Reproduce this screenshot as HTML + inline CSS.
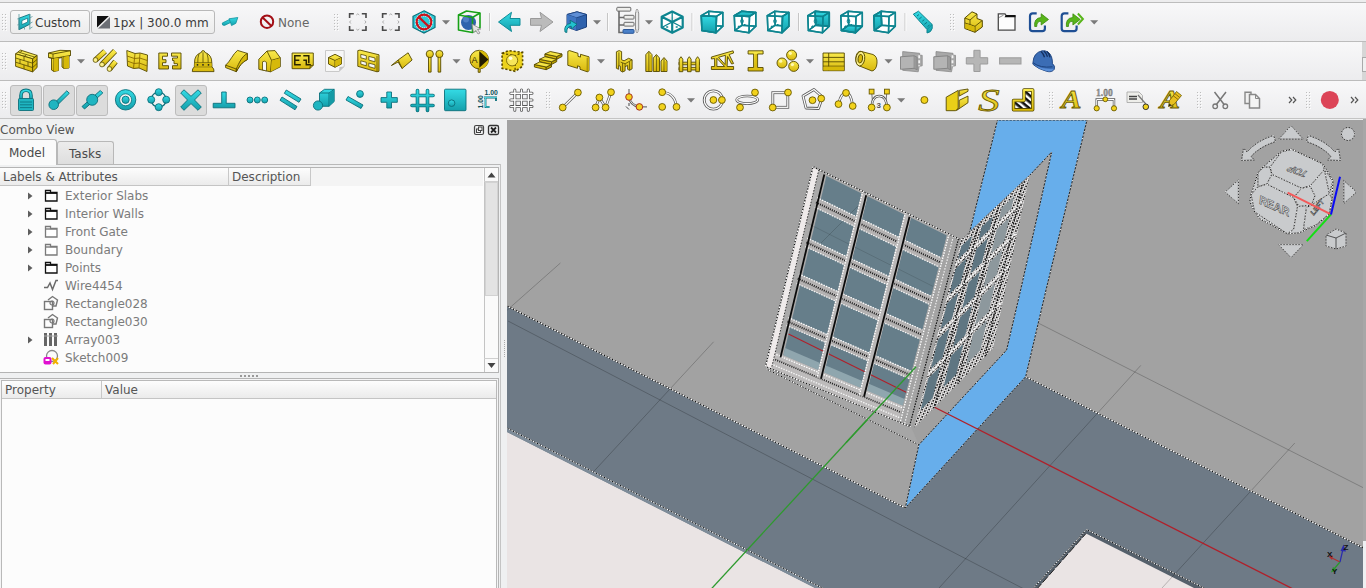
<!DOCTYPE html>
<html><head><meta charset="utf-8"><title>FreeCAD</title><style>
html,body{margin:0;padding:0}
body{width:1366px;height:588px;overflow:hidden;background:#eff0f1;font-family:"DejaVu Sans","Liberation Sans",sans-serif;font-size:12px;color:#7b7b7b;position:relative}
.abs{position:absolute}
.tb{position:absolute;left:0;width:1366px;background:linear-gradient(#f8f8f9,#ececee)}
.btn{position:absolute;box-sizing:border-box;border:1px solid #b9b9b9;border-radius:3px;background:linear-gradient(#f8f8f8,#ececec)}
.pressed{position:absolute;box-sizing:border-box;border:1px solid #bcbcbc;border-radius:3px;background:#dcdcdc}
.txt{position:absolute;white-space:nowrap;line-height:16px;color:#3a3a3a}
.row{position:absolute;left:65px;white-space:nowrap;line-height:18px;height:18px}
.hdr{position:absolute;box-sizing:border-box;background:linear-gradient(#fdfdfd,#ebebeb);border-right:1px solid #c8c8c8;border-bottom:1px solid #c4c4c4;color:#555;line-height:19px;height:18px;padding-left:3px;white-space:nowrap}
</style></head><body>
<div class="abs" style="left:0;top:0;width:1366px;height:2px;background:#ededee"></div>
<div class="abs" style="left:0;top:2px;width:1366px;height:1px;background:#bdbdbd"></div>
<div class="tb" style="top:3px;height:38px"></div>
<div class="abs" style="left:0;top:41px;width:1366px;height:1px;background:#bcbcbc"></div>
<div class="tb" style="top:42px;height:38px"></div>
<div class="abs" style="left:0;top:80px;width:1366px;height:1px;background:#bcbcbc"></div>
<div class="tb" style="top:81px;height:37px"></div>
<div class="abs" style="left:0;top:118px;width:1366px;height:1px;background:#c4c4c4"></div>
<div class="abs" style="left:1363px;top:119px;width:3px;height:422px;background:#a7a7a7"></div>
<div class="abs" style="left:1363px;top:541px;width:3px;height:48px;background:#eef0f2"></div>
<div class="abs" style="left:1362px;top:42px;width:4px;height:38px;background:#d6d6d6"></div>
<div class="abs" style="left:1362px;top:57px;width:5px;height:15px;background:#f0f0f0;border:1px solid #aaa;box-sizing:border-box"></div>
<div class="btn" style="left:10px;top:10px;width:80px;height:24px"></div>
<div class="btn" style="left:91px;top:10px;width:124px;height:24px"></div>
<div class="txt" style="left:35px;top:15px">Custom</div>
<div class="txt" style="left:113px;top:15px">1px | 300.0 mm</div>
<div class="txt" style="left:278px;top:15px;color:#666">None</div>
<div class="pressed" style="left:10px;top:85px;width:32px;height:31px"></div>
<div class="pressed" style="left:43px;top:85px;width:32px;height:31px"></div>
<div class="pressed" style="left:76px;top:85px;width:32px;height:31px"></div>
<div class="pressed" style="left:175px;top:85px;width:32px;height:31px"></div>
<svg class="abs" style="left:0;top:0" width="1366" height="120" viewBox="0 0 1366 120">
<defs><linearGradient id="gy" x1="0" y1="0" x2="0" y2="1"><stop offset="0" stop-color="#f9ea4c"/><stop offset="1" stop-color="#d8b80c"/></linearGradient><linearGradient id="gt" x1="0" y1="0" x2="0" y2="1"><stop offset="0" stop-color="#34dbe5"/><stop offset="1" stop-color="#149fab"/></linearGradient></defs>
<rect x="2" y="14" width="1" height="1" fill="#bdbdbd"/><rect x="3" y="15" width="1" height="1" fill="#fdfdfd"/><rect x="5" y="14" width="1" height="1" fill="#bdbdbd"/><rect x="6" y="15" width="1" height="1" fill="#fdfdfd"/><rect x="2" y="17" width="1" height="1" fill="#bdbdbd"/><rect x="3" y="18" width="1" height="1" fill="#fdfdfd"/><rect x="5" y="17" width="1" height="1" fill="#bdbdbd"/><rect x="6" y="18" width="1" height="1" fill="#fdfdfd"/><rect x="2" y="20" width="1" height="1" fill="#bdbdbd"/><rect x="3" y="21" width="1" height="1" fill="#fdfdfd"/><rect x="5" y="20" width="1" height="1" fill="#bdbdbd"/><rect x="6" y="21" width="1" height="1" fill="#fdfdfd"/><rect x="2" y="23" width="1" height="1" fill="#bdbdbd"/><rect x="3" y="24" width="1" height="1" fill="#fdfdfd"/><rect x="5" y="23" width="1" height="1" fill="#bdbdbd"/><rect x="6" y="24" width="1" height="1" fill="#fdfdfd"/><rect x="2" y="26" width="1" height="1" fill="#bdbdbd"/><rect x="3" y="27" width="1" height="1" fill="#fdfdfd"/><rect x="5" y="26" width="1" height="1" fill="#bdbdbd"/><rect x="6" y="27" width="1" height="1" fill="#fdfdfd"/><rect x="2" y="29" width="1" height="1" fill="#bdbdbd"/><rect x="3" y="30" width="1" height="1" fill="#fdfdfd"/><rect x="5" y="29" width="1" height="1" fill="#bdbdbd"/><rect x="6" y="30" width="1" height="1" fill="#fdfdfd"/>
<path d="M19 18.2 L29.8 14.2 L29.8 24.2 L19 29.7 Z" fill="url(#gt)" stroke="#0b6f7a" stroke-width="0.9"/>
<path d="M21.9 20.6 L27.6 18.2 L27.6 22 L21.9 24.6 Z" fill="#fff" stroke="#0b6f7a" stroke-width="0.7"/>
<path d="M19 14 V30 M29.8 14 V29.5 M24.5 26.5 V29.5 M17.3 19 L19 18.2 M17.3 25 L19 24.2 M29.8 17.8 L32.5 16.5 M29.8 23.5 L32.5 22 M29.8 28.5 L32.5 27" stroke="#5a9aa0" stroke-width="0.8" fill="none"/>
<rect x="97" y="16" width="13" height="12.5" fill="#6c6f75"/><path d="M97 16 H110 L97 28.5 Z" fill="#111"/><path d="M110.5 15.5 L96.5 29" stroke="#f2f2f2" stroke-width="1.6"/>
<path d="M222.3 23 L229.3 19.6 L230.8 22.4 L224.5 25.4 Q221.8 25.8 222.3 23 Z" fill="url(#gt)" stroke="#14939e" stroke-width="0.8" stroke-linejoin="round"/>
<path d="M229 18.8 L237.8 17.5 L235.8 23.4 L231.5 25.6 L230.3 21.8 Z" fill="url(#gt)" stroke="#14939e" stroke-width="0.8" stroke-linejoin="round"/>
<circle cx="267" cy="21.7" r="6.2" fill="none" stroke="#a30f16" stroke-width="2"/><path d="M262.6 17.5 L271.4 26" stroke="#a30f16" stroke-width="2"/>
<rect x="334" y="14" width="1" height="1" fill="#bdbdbd"/><rect x="335" y="15" width="1" height="1" fill="#fdfdfd"/><rect x="337" y="14" width="1" height="1" fill="#bdbdbd"/><rect x="338" y="15" width="1" height="1" fill="#fdfdfd"/><rect x="334" y="17" width="1" height="1" fill="#bdbdbd"/><rect x="335" y="18" width="1" height="1" fill="#fdfdfd"/><rect x="337" y="17" width="1" height="1" fill="#bdbdbd"/><rect x="338" y="18" width="1" height="1" fill="#fdfdfd"/><rect x="334" y="20" width="1" height="1" fill="#bdbdbd"/><rect x="335" y="21" width="1" height="1" fill="#fdfdfd"/><rect x="337" y="20" width="1" height="1" fill="#bdbdbd"/><rect x="338" y="21" width="1" height="1" fill="#fdfdfd"/><rect x="334" y="23" width="1" height="1" fill="#bdbdbd"/><rect x="335" y="24" width="1" height="1" fill="#fdfdfd"/><rect x="337" y="23" width="1" height="1" fill="#bdbdbd"/><rect x="338" y="24" width="1" height="1" fill="#fdfdfd"/><rect x="334" y="26" width="1" height="1" fill="#bdbdbd"/><rect x="335" y="27" width="1" height="1" fill="#fdfdfd"/><rect x="337" y="26" width="1" height="1" fill="#bdbdbd"/><rect x="338" y="27" width="1" height="1" fill="#fdfdfd"/><rect x="334" y="29" width="1" height="1" fill="#bdbdbd"/><rect x="335" y="30" width="1" height="1" fill="#fdfdfd"/><rect x="337" y="29" width="1" height="1" fill="#bdbdbd"/><rect x="338" y="30" width="1" height="1" fill="#fdfdfd"/>
<g transform="translate(348.8 13.0)"><path d="M0.8 5 V0.8 H5 M13 0.8 H17.2 V5 M17.2 13 V17.2 H13 M5 17.2 H0.8 V13" fill="none" stroke="#4a4a4a" stroke-width="1.6"/><path d="M7.5 2 L9 0.8 L10.5 2 M7.5 16 L9 17.2 L10.5 16 M2 7.5 L0.8 9 L2 10.5 M16 7.5 L17.2 9 L16 10.5" fill="none" stroke="#999" stroke-width="0.8"/></g>
<g transform="translate(381.8 13.0)"><path d="M0.8 5 V0.8 H5 M13 0.8 H17.2 V5 M17.2 13 V17.2 H13 M5 17.2 H0.8 V13" fill="none" stroke="#4a4a4a" stroke-width="1.6"/><path d="M7.5 2 L9 0.8 L10.5 2 M7.5 16 L9 17.2 L10.5 16 M2 7.5 L0.8 9 L2 10.5 M16 7.5 L17.2 9 L16 10.5" fill="none" stroke="#999" stroke-width="0.8"/></g>
<path d="M424 10.8 L435 16.3 L435 27.5 L424 33 L413 27.5 L413 16.3 Z" fill="#2cc9d5" stroke="#0b6f7a" stroke-width="1.2"/>
<circle cx="424" cy="22" r="7.3" fill="none" stroke="#fff" stroke-width="3.4" stroke-dasharray="1.5 1"/><circle cx="424" cy="22" r="7.3" fill="none" stroke="#c8141c" stroke-width="2.2"/><path d="M418.8 17 L429.2 27" stroke="#c8141c" stroke-width="2.4"/>
<path d="M442.0 20.2 h8 l-4 4.2 z" fill="#7a7a7a"/>
<path d="M458.5 15 L466.5 11 L480 13 L480 27.5 L472.5 32.5 L458.5 30 Z" fill="#f4f4f4" stroke="#17a117" stroke-width="1.6" stroke-linejoin="round"/>
<circle cx="468.5" cy="22.5" r="7.5" fill="#2f62ad"/><circle cx="466" cy="19.5" r="3" fill="#5d8bd0" opacity="0.7"/>
<path d="M458.5 15 L472.5 17.5 L480 13 M472.5 17.5 V32.5" fill="none" stroke="#17a117" stroke-width="1.6"/>
<path d="M472 24 L480.8 29 L477.5 29.5 L480 33 L478 34 L475.8 30.5 L473.5 32.8 Z" fill="#e4e4e4" stroke="#8a8a8a" stroke-width="0.8"/>
<rect x="489.0" y="13.0" width="1" height="18" fill="#c6c6c6"/><rect x="490.0" y="13.0" width="1" height="18" fill="#fbfbfb"/>
<path d="M498.5 22 L511.5 12.3 L510 18.5 L520 18.5 L520 25.3 L510 25.3 L511.5 31.5 Z" fill="url(#gt)" stroke="#0f8c97" stroke-width="1" stroke-linejoin="round"/>
<path d="M553 22 L540 12.3 L541.5 18.5 L530.5 18.5 L530.5 25.3 L541.5 25.3 L540 31.5 Z" fill="#bbbbbb" stroke="#9a9a9a" stroke-width="1" stroke-linejoin="round"/>
<path d="M567 14.5 L577 11.8 L586.5 14.5 L586.5 27 L576.5 30.5 L567 27 Z" fill="#2f62ad" stroke="#1b3f7a" stroke-width="1" stroke-linejoin="round"/>
<path d="M567 14.5 L577 11.8 L586.5 14.5 L576.5 17.8 Z" fill="#5f8fd6" stroke="#1b3f7a" stroke-width="0.8"/><path d="M576.5 17.8 V30.5" stroke="#1b3f7a" stroke-width="0.8"/><path d="M567 14.5 L576.5 17.8 V30.5 L567 27Z" fill="#3f75c2"/>
<path d="M565 32 Q563.5 24.5 570.5 23.3 L570 20.2 L577 24.2 L571.5 29 L571.2 26.2 Q566.5 26.5 566.8 32.5 Z" fill="#22c3cf" stroke="#0b6f7a" stroke-width="0.9" stroke-linejoin="round"/>
<path d="M593.0 20.2 h8 l-4 4.2 z" fill="#7a7a7a"/>
<rect x="607.0" y="13.0" width="1" height="18" fill="#c6c6c6"/><rect x="608.0" y="13.0" width="1" height="18" fill="#fbfbfb"/>
<g transform="translate(616.0 6.5)"><path d="M3 4 V26 H7 M3 11 H8 M3 18.5 H8" fill="none" stroke="#6a6a6a" stroke-width="1.6"/><rect x="0.8" y="0.8" width="14" height="3.8" rx="0.8" fill="#eeeeec" stroke="#6a6a6a" stroke-width="1"/><rect x="8" y="8.8" width="10" height="3.8" rx="0.8" fill="#eeeeec" stroke="#6a6a6a" stroke-width="1"/><rect x="8" y="15.8" width="10" height="3.8" rx="0.8" fill="#eeeeec" stroke="#6a6a6a" stroke-width="1"/><rect x="7" y="23" width="11" height="3.8" rx="0.8" fill="#4a80c8" stroke="#2a5698" stroke-width="1"/><rect x="19.5" y="5" width="3.2" height="19" rx="1.5" fill="#e8e8e8" stroke="#777" stroke-width="0.8"/><path d="M19.6 5 L21 2.5 L22.6 5 M19.6 24 L21 26.5 L22.6 24" fill="#fff" stroke="#777" stroke-width="0.7"/></g>
<path d="M645.0 20.2 h8 l-4 4.2 z" fill="#7a7a7a"/>
<g transform="translate(660.2 10.5)"><path d="M12 1 L22.5 6.3 V17 L12 22.3 L1.5 17 V6.3 Z M1.5 6.3 L12 11.5 L22.5 6.3 M12 11.5 V22.3" fill="#fff" stroke="#0e8590" stroke-width="2.2" stroke-linejoin="round"/><path d="M12 1 V11.5 M1.5 17 L12 11.5 L22.5 17" fill="none" stroke="#0e8590" stroke-width="1.3"/><path d="M6 16.5 h2 M15.5 16.5 h2" stroke="#0e8590" stroke-width="1.5"/></g>
<rect x="691.5" y="13.0" width="1" height="18" fill="#c6c6c6"/><rect x="692.5" y="13.0" width="1" height="18" fill="#fbfbfb"/>
<g transform="translate(700.0 10.2)"><polygon points="1.3,5.5 8.6,1.1 22.8,2.2 22.8,16.0 16.0,22.6 1.9,20.3" fill="#fff"/><polygon points="8.6,1.1 22.8,2.2 22.8,16.0 9.2,15.0" fill="none" stroke="#0e8590" stroke-width="1.5" stroke-linejoin="round"/><polygon points="1.3,5.5 8.6,1.1 9.2,15.0 1.9,20.3" fill="none" stroke="#0e8590" stroke-width="1.5" stroke-linejoin="round"/><polygon points="1.9,20.3 9.2,15.0 22.8,16.0 16.0,22.6" fill="none" stroke="#0e8590" stroke-width="1.5" stroke-linejoin="round"/><polygon points="1.3,5.5 16.5,6.2 16.0,22.6 1.9,20.3" fill="url(#gt)" stroke="#0e8590" stroke-width="1.5" stroke-linejoin="round"/><polygon points="1.3,5.5 16.5,6.2 16.0,22.6 1.9,20.3" fill="none" stroke="#0e8590" stroke-width="1.5" stroke-linejoin="round"/><polygon points="1.3,5.5 8.6,1.1 22.8,2.2 16.5,6.2" fill="none" stroke="#0e8590" stroke-width="1.5" stroke-linejoin="round"/><polygon points="16.5,6.2 22.8,2.2 22.8,16.0 16.0,22.6" fill="none" stroke="#0e8590" stroke-width="1.5" stroke-linejoin="round"/></g>
<g transform="translate(733.0 10.2)"><polygon points="1.3,5.5 8.6,1.1 22.8,2.2 22.8,16.0 16.0,22.6 1.9,20.3" fill="#fff"/><polygon points="8.6,1.1 22.8,2.2 22.8,16.0 9.2,15.0" fill="none" stroke="#0e8590" stroke-width="1.5" stroke-linejoin="round"/><polygon points="1.3,5.5 8.6,1.1 9.2,15.0 1.9,20.3" fill="none" stroke="#0e8590" stroke-width="1.5" stroke-linejoin="round"/><polygon points="1.9,20.3 9.2,15.0 22.8,16.0 16.0,22.6" fill="none" stroke="#0e8590" stroke-width="1.5" stroke-linejoin="round"/><polygon points="1.3,5.5 8.6,1.1 22.8,2.2 16.5,6.2" fill="url(#gt)" stroke="#0e8590" stroke-width="1.5" stroke-linejoin="round"/><polygon points="1.3,5.5 16.5,6.2 16.0,22.6 1.9,20.3" fill="none" stroke="#0e8590" stroke-width="1.5" stroke-linejoin="round"/><polygon points="1.3,5.5 8.6,1.1 22.8,2.2 16.5,6.2" fill="none" stroke="#0e8590" stroke-width="1.5" stroke-linejoin="round"/><polygon points="16.5,6.2 22.8,2.2 22.8,16.0 16.0,22.6" fill="none" stroke="#0e8590" stroke-width="1.5" stroke-linejoin="round"/><ellipse cx="9" cy="11" rx="1.3" ry="2" fill="none" stroke="#0e8590" stroke-width="1"/><path d="M5 17 l1.5 -1.5 M11 14.5 h1.5" stroke="#0e8590" stroke-width="1.4"/></g>
<g transform="translate(766.0 10.2)"><polygon points="1.3,5.5 8.6,1.1 22.8,2.2 22.8,16.0 16.0,22.6 1.9,20.3" fill="#fff"/><polygon points="8.6,1.1 22.8,2.2 22.8,16.0 9.2,15.0" fill="none" stroke="#0e8590" stroke-width="1.5" stroke-linejoin="round"/><polygon points="1.3,5.5 8.6,1.1 9.2,15.0 1.9,20.3" fill="none" stroke="#0e8590" stroke-width="1.5" stroke-linejoin="round"/><polygon points="1.9,20.3 9.2,15.0 22.8,16.0 16.0,22.6" fill="none" stroke="#0e8590" stroke-width="1.5" stroke-linejoin="round"/><polygon points="16.5,6.2 22.8,2.2 22.8,16.0 16.0,22.6" fill="url(#gt)" stroke="#0e8590" stroke-width="1.5" stroke-linejoin="round"/><polygon points="1.3,5.5 16.5,6.2 16.0,22.6 1.9,20.3" fill="none" stroke="#0e8590" stroke-width="1.5" stroke-linejoin="round"/><polygon points="1.3,5.5 8.6,1.1 22.8,2.2 16.5,6.2" fill="none" stroke="#0e8590" stroke-width="1.5" stroke-linejoin="round"/><polygon points="16.5,6.2 22.8,2.2 22.8,16.0 16.0,22.6" fill="none" stroke="#0e8590" stroke-width="1.5" stroke-linejoin="round"/><ellipse cx="9" cy="11" rx="1.3" ry="2" fill="none" stroke="#0e8590" stroke-width="1"/><path d="M5 17 l1.5 -1.5 M11 14.5 h1.5" stroke="#0e8590" stroke-width="1.4"/></g>
<rect x="798.0" y="13.0" width="1" height="18" fill="#c6c6c6"/><rect x="799.0" y="13.0" width="1" height="18" fill="#fbfbfb"/>
<g transform="translate(806.5 10.2)"><polygon points="1.3,5.5 8.6,1.1 22.8,2.2 22.8,16.0 16.0,22.6 1.9,20.3" fill="#fff"/><polygon points="8.6,1.1 22.8,2.2 22.8,16.0 9.2,15.0" fill="url(#gt)" stroke="#0e8590" stroke-width="1.5" stroke-linejoin="round"/><polygon points="8.6,1.1 22.8,2.2 22.8,16.0 9.2,15.0" fill="none" stroke="#0e8590" stroke-width="1.5" stroke-linejoin="round"/><polygon points="1.3,5.5 8.6,1.1 9.2,15.0 1.9,20.3" fill="none" stroke="#0e8590" stroke-width="1.5" stroke-linejoin="round"/><polygon points="1.9,20.3 9.2,15.0 22.8,16.0 16.0,22.6" fill="none" stroke="#0e8590" stroke-width="1.5" stroke-linejoin="round"/><polygon points="1.3,5.5 16.5,6.2 16.0,22.6 1.9,20.3" fill="none" stroke="#0e8590" stroke-width="1.5" stroke-linejoin="round"/><polygon points="1.3,5.5 8.6,1.1 22.8,2.2 16.5,6.2" fill="none" stroke="#0e8590" stroke-width="1.5" stroke-linejoin="round"/><polygon points="16.5,6.2 22.8,2.2 22.8,16.0 16.0,22.6" fill="none" stroke="#0e8590" stroke-width="1.5" stroke-linejoin="round"/><ellipse cx="9" cy="11" rx="1.3" ry="2" fill="none" stroke="#0e8590" stroke-width="1"/><path d="M5 17 l1.5 -1.5 M11 14.5 h1.5" stroke="#0e8590" stroke-width="1.4"/></g>
<g transform="translate(839.5 10.2)"><polygon points="1.3,5.5 8.6,1.1 22.8,2.2 22.8,16.0 16.0,22.6 1.9,20.3" fill="#fff"/><polygon points="1.9,20.3 9.2,15.0 22.8,16.0 16.0,22.6" fill="url(#gt)" stroke="#0e8590" stroke-width="1.5" stroke-linejoin="round"/><polygon points="8.6,1.1 22.8,2.2 22.8,16.0 9.2,15.0" fill="none" stroke="#0e8590" stroke-width="1.5" stroke-linejoin="round"/><polygon points="1.3,5.5 8.6,1.1 9.2,15.0 1.9,20.3" fill="none" stroke="#0e8590" stroke-width="1.5" stroke-linejoin="round"/><polygon points="1.9,20.3 9.2,15.0 22.8,16.0 16.0,22.6" fill="none" stroke="#0e8590" stroke-width="1.5" stroke-linejoin="round"/><polygon points="1.3,5.5 16.5,6.2 16.0,22.6 1.9,20.3" fill="none" stroke="#0e8590" stroke-width="1.5" stroke-linejoin="round"/><polygon points="1.3,5.5 8.6,1.1 22.8,2.2 16.5,6.2" fill="none" stroke="#0e8590" stroke-width="1.5" stroke-linejoin="round"/><polygon points="16.5,6.2 22.8,2.2 22.8,16.0 16.0,22.6" fill="none" stroke="#0e8590" stroke-width="1.5" stroke-linejoin="round"/><ellipse cx="9" cy="11" rx="1.3" ry="2" fill="none" stroke="#0e8590" stroke-width="1"/><path d="M5 17 l1.5 -1.5 M11 14.5 h1.5" stroke="#0e8590" stroke-width="1.4"/></g>
<g transform="translate(872.5 10.2)"><polygon points="1.3,5.5 8.6,1.1 22.8,2.2 22.8,16.0 16.0,22.6 1.9,20.3" fill="#fff"/><polygon points="1.3,5.5 8.6,1.1 9.2,15.0 1.9,20.3" fill="url(#gt)" stroke="#0e8590" stroke-width="1.5" stroke-linejoin="round"/><polygon points="8.6,1.1 22.8,2.2 22.8,16.0 9.2,15.0" fill="none" stroke="#0e8590" stroke-width="1.5" stroke-linejoin="round"/><polygon points="1.3,5.5 8.6,1.1 9.2,15.0 1.9,20.3" fill="none" stroke="#0e8590" stroke-width="1.5" stroke-linejoin="round"/><polygon points="1.9,20.3 9.2,15.0 22.8,16.0 16.0,22.6" fill="none" stroke="#0e8590" stroke-width="1.5" stroke-linejoin="round"/><polygon points="1.3,5.5 16.5,6.2 16.0,22.6 1.9,20.3" fill="none" stroke="#0e8590" stroke-width="1.5" stroke-linejoin="round"/><polygon points="1.3,5.5 8.6,1.1 22.8,2.2 16.5,6.2" fill="none" stroke="#0e8590" stroke-width="1.5" stroke-linejoin="round"/><polygon points="16.5,6.2 22.8,2.2 22.8,16.0 16.0,22.6" fill="none" stroke="#0e8590" stroke-width="1.5" stroke-linejoin="round"/></g>
<rect x="904.5" y="13.0" width="1" height="18" fill="#c6c6c6"/><rect x="905.5" y="13.0" width="1" height="18" fill="#fbfbfb"/>
<path d="M913.3 14.2 L918.5 11.2 L932.2 24.5 L932.2 28.5 Q931 32.5 927 33 L927 29.5 Z" fill="url(#gt)" stroke="#0e8590" stroke-width="1" stroke-linejoin="round"/>
<path d="M927 29.5 L932.2 24.5" stroke="#0e8590" stroke-width="0.8"/><path d="M919 14.5 l-2 1.5 M921.7 17 l-2.6 2 M924.3 19.7 l-2 1.5 M927 22.3 l-2.6 2 M929.6 25 l-2 1.5" stroke="#0b6f7a" stroke-width="0.9"/>
<rect x="950" y="14" width="1" height="1" fill="#bdbdbd"/><rect x="951" y="15" width="1" height="1" fill="#fdfdfd"/><rect x="953" y="14" width="1" height="1" fill="#bdbdbd"/><rect x="954" y="15" width="1" height="1" fill="#fdfdfd"/><rect x="950" y="17" width="1" height="1" fill="#bdbdbd"/><rect x="951" y="18" width="1" height="1" fill="#fdfdfd"/><rect x="953" y="17" width="1" height="1" fill="#bdbdbd"/><rect x="954" y="18" width="1" height="1" fill="#fdfdfd"/><rect x="950" y="20" width="1" height="1" fill="#bdbdbd"/><rect x="951" y="21" width="1" height="1" fill="#fdfdfd"/><rect x="953" y="20" width="1" height="1" fill="#bdbdbd"/><rect x="954" y="21" width="1" height="1" fill="#fdfdfd"/><rect x="950" y="23" width="1" height="1" fill="#bdbdbd"/><rect x="951" y="24" width="1" height="1" fill="#fdfdfd"/><rect x="953" y="23" width="1" height="1" fill="#bdbdbd"/><rect x="954" y="24" width="1" height="1" fill="#fdfdfd"/><rect x="950" y="26" width="1" height="1" fill="#bdbdbd"/><rect x="951" y="27" width="1" height="1" fill="#fdfdfd"/><rect x="953" y="26" width="1" height="1" fill="#bdbdbd"/><rect x="954" y="27" width="1" height="1" fill="#fdfdfd"/><rect x="950" y="29" width="1" height="1" fill="#bdbdbd"/><rect x="951" y="30" width="1" height="1" fill="#fdfdfd"/><rect x="953" y="29" width="1" height="1" fill="#bdbdbd"/><rect x="954" y="30" width="1" height="1" fill="#fdfdfd"/>
<path d="M964.8 18 L972 11.8 L977 14 L977 18.5 L982.3 20.5 L982.3 27 L975 32.3 L964.8 28.5 Z" fill="url(#gy)" stroke="#564a00" stroke-width="1" stroke-linejoin="round"/>
<path d="M964.8 18 L970 20 L977 14 M970 20 V24.5 L975 26.3 L982.3 20.5 M975 26.3 V32.3 M964.8 23 L970 24.5" fill="none" stroke="#564a00" stroke-width="0.9"/>
<path d="M965.3 23.5 L974.5 26.8 V31.6 L965.3 28.2Z" fill="#d6b90a"/>
<path d="M998.3 13.8 H1005 L1006.5 16 H1015 V30.2 H998.3 Z" fill="#fdfdfd" stroke="#4a4a4a" stroke-width="1.3"/><path d="M1006 15 H1015.5 V17.3 H1004.5 Z" fill="#111"/><path d="M999 17.5 L1003.5 15.2" stroke="#777" stroke-width="0.8"/>
<g transform="translate(1028.7 12.0)"><path d="M8 1.3 H4 Q1.3 1.3 1.3 4 V16.5 Q1.3 19.2 4 19.2 H13.5 Q16.2 19.2 16.2 16.5 V13.5" fill="none" stroke="#1f4f94" stroke-width="2.2"/><path d="M6 14.5 Q5 6 12.5 5.5 L12.5 1.8 L19.8 7.5 L12.5 13 L12.5 9.3 Q8 9 8 14.5 Z" fill="#58b51a" stroke="#3a8a0a" stroke-width="0.8" stroke-linejoin="round"/></g>
<g transform="translate(1060.4 12.0)"><path d="M8 1.3 H4 Q1.3 1.3 1.3 4 V16.5 Q1.3 19.2 4 19.2 H13.5 Q16.2 19.2 16.2 16.5 V13.5" fill="none" stroke="#1f4f94" stroke-width="2.2"/><path d="M6 14.5 Q5 6 12.5 5.5 L12.5 1.8 L19.8 7.5 L12.5 13 L12.5 9.3 Q8 9 8 14.5 Z" fill="#58b51a" stroke="#3a8a0a" stroke-width="0.8" stroke-linejoin="round"/><path d="M17.5 1.5 L22.5 7 L17.5 12.5" fill="none" stroke="#58b51a" stroke-width="2"/></g>
<path d="M1090.2 20.2 h8 l-4 4.2 z" fill="#7a7a7a"/>
<rect x="2" y="53" width="1" height="1" fill="#bdbdbd"/><rect x="3" y="54" width="1" height="1" fill="#fdfdfd"/><rect x="5" y="53" width="1" height="1" fill="#bdbdbd"/><rect x="6" y="54" width="1" height="1" fill="#fdfdfd"/><rect x="2" y="56" width="1" height="1" fill="#bdbdbd"/><rect x="3" y="57" width="1" height="1" fill="#fdfdfd"/><rect x="5" y="56" width="1" height="1" fill="#bdbdbd"/><rect x="6" y="57" width="1" height="1" fill="#fdfdfd"/><rect x="2" y="59" width="1" height="1" fill="#bdbdbd"/><rect x="3" y="60" width="1" height="1" fill="#fdfdfd"/><rect x="5" y="59" width="1" height="1" fill="#bdbdbd"/><rect x="6" y="60" width="1" height="1" fill="#fdfdfd"/><rect x="2" y="62" width="1" height="1" fill="#bdbdbd"/><rect x="3" y="63" width="1" height="1" fill="#fdfdfd"/><rect x="5" y="62" width="1" height="1" fill="#bdbdbd"/><rect x="6" y="63" width="1" height="1" fill="#fdfdfd"/><rect x="2" y="65" width="1" height="1" fill="#bdbdbd"/><rect x="3" y="66" width="1" height="1" fill="#fdfdfd"/><rect x="5" y="65" width="1" height="1" fill="#bdbdbd"/><rect x="6" y="66" width="1" height="1" fill="#fdfdfd"/><rect x="2" y="68" width="1" height="1" fill="#bdbdbd"/><rect x="3" y="69" width="1" height="1" fill="#fdfdfd"/><rect x="5" y="68" width="1" height="1" fill="#bdbdbd"/><rect x="6" y="69" width="1" height="1" fill="#fdfdfd"/>
<polygon points="15.6,53.8 20.5,50.1 37.1,55.4 32.6,58.8" fill="#f9ec55" stroke="#564a00" stroke-width="0.9" stroke-linejoin="round"/>
<polygon points="15.6,53.8 32.6,58.8 32.6,71.9 15.6,66.3" fill="url(#gy)" stroke="#564a00" stroke-width="0.9" stroke-linejoin="round"/>
<polygon points="37.1,55.4 37.1,67.5 32.6,71.9 32.6,58.8" fill="#d6b90a" stroke="#564a00" stroke-width="0.9" stroke-linejoin="round"/>
<path d="M15.6 58 L32.6 63.2 L37.1 59.4 M15.6 62.2 L32.6 67.6 L37.1 63.5 M24 56.3 V60.6 M20 59.3 V63.6 M28 61.8 V66.2 M24 64.8 V69 M18 52 L34.8 57.1 M26.5 54.6 L24 56.5 M22 51 L19.8 52.6" fill="none" stroke="#564a00" stroke-width="0.8"/>
<g transform="translate(48.0 49.5)"><path d="M0.5 3.5 L12 0.8 L22.5 1.2 L22.5 6 L21 6.5 L21 18.5 L16 19 L14 17.5 L14 8 L10.5 8.7 L10.5 21 L6 22 L3.5 20.5 L3.5 8.5 L0.5 8 Z" fill="url(#gy)" stroke="#564a00" stroke-width="0.9" stroke-linejoin="round"/><path d="M0.5 3.5 L5 4.5 L22.5 1.2 M5 4.5 V9 L0.5 8 M5 9 L22.5 6 M6 8.8 V22 M16 7.2 V19" fill="none" stroke="#564a00" stroke-width="0.9" stroke-linejoin="round"/><path d="M6 9 L10.5 8.5 V21 L6 22Z M16 7.3 L21 6.5 V18.5 L16 19Z" fill="#d6b90a"/></g>
<path d="M77.0 59.2 h8 l-4 4.2 z" fill="#7a7a7a"/>
<g transform="translate(93.0 49.5)"><path d="M2.5 10.5 L12.0 1.8" stroke="#564a00" stroke-width="5.6" stroke-linecap="butt"/><path d="M2.5 10.5 L12.0 1.8" stroke="url(#gy)" stroke-width="4" stroke-linecap="butt"/><circle cx="2.5" cy="10.5" r="2.4" fill="#fbf08a" stroke="#564a00" stroke-width="0.8"/><path d="M9.0 15.0 L22.0 1.5" stroke="#564a00" stroke-width="5.6" stroke-linecap="butt"/><path d="M9.0 15.0 L22.0 1.5" stroke="url(#gy)" stroke-width="4" stroke-linecap="butt"/><circle cx="9.0" cy="15.0" r="2.4" fill="#fbf08a" stroke="#564a00" stroke-width="0.8"/><path d="M16.5 19.5 L22.5 12.0" stroke="#564a00" stroke-width="5.6" stroke-linecap="butt"/><path d="M16.5 19.5 L22.5 12.0" stroke="url(#gy)" stroke-width="4" stroke-linecap="butt"/><circle cx="16.5" cy="19.5" r="2.4" fill="#fbf08a" stroke="#564a00" stroke-width="0.8"/></g>
<g transform="translate(126.0 49.5)"><path d="M0.8 1 L9 4 L14 3.5 L21.5 5.5 L21 22 L13 18.5 L7.5 19 L1.5 16.5 Z" fill="url(#gy)" stroke="#564a00" stroke-width="0.9" stroke-linejoin="round"/><path d="M9 4 L7.5 19 M14 3.5 L13 18.5 M1 6.5 L8.5 9 L13.7 8.5 L21.3 11 M1.3 11.5 L8 14 L13.3 13.5 L21.2 16.5" fill="none" stroke="#8a6a00" stroke-width="0.9"/></g>
<g transform="translate(158.0 52.2)"><path d="M0.8 0.8 H9.5 V4 H4.5 V7.5 H8 V10.5 H4.5 V13.5 H10.5 V16.8 H0.8 Z M13.5 0.8 H23 V16.8 H14.5 V13.5 H19.5 V11.5 H16 V8.3 H14.5 V5.8 H19.5 V4 H13.5 Z" fill="url(#gy)" stroke="#564a00" stroke-width="0.9" stroke-linejoin="round"/></g>
<g transform="translate(192.0 49.8)"><path d="M11 0.8 Q12.8 0.8 12.8 2.5 Q20 5 19.8 13 L20 17 Q22.3 19 22 21.8 H0.3 Q0 19 2.3 17 L2.5 13 Q2.3 5 9.5 2.5 Q9.5 0.8 11 0.8Z" fill="url(#gy)" stroke="#564a00" stroke-width="0.9" stroke-linejoin="round"/><path d="M2.5 13 H19.8 M2.3 17 H20 M11 2.5 V13 M7 4 Q5.5 8 5.8 13 M15 4 Q16.5 8 16.2 13" fill="none" stroke="#564a00" stroke-width="0.8"/><rect x="2.6" y="13.3" width="17" height="3.5" fill="#d6b90a"/><circle cx="5.5" cy="15" r="0.9" fill="#222"/><circle cx="11" cy="15" r="0.9" fill="#222"/><circle cx="16.5" cy="15" r="0.9" fill="#222"/></g>
<g transform="translate(225.0 49.8)"><path d="M0.6 15.4 C5 12 8 4 12.5 0.6 L22.3 3.6 L22.3 9.8 C17 12 14 17 11.3 21.9 L0.6 17.8 Z" fill="url(#gy)" stroke="#564a00" stroke-width="0.9" stroke-linejoin="round"/><path d="M11.3 19.2 C14 13 17 6.5 22.3 3.6 L22.3 9.8 C17 12 14 17 11.3 21.9 Z" fill="#d6b90a" stroke="#564a00" stroke-width="0.9" stroke-linejoin="round"/><path d="M0.6 15.4 L11.3 19.2 V21.9" fill="none" stroke="#564a00" stroke-width="0.9" stroke-linejoin="round"/></g>
<g transform="translate(258.0 49.8)"><path d="M0.8 9.5 L9 1.2 L17 0.8 L22.3 8 L22.3 17 L12.5 22 L0.8 19.5 Z" fill="url(#gy)" stroke="#564a00" stroke-width="0.9" stroke-linejoin="round"/><path d="M9 1.2 L13.5 10.5 L22.3 8 M13.5 10.5 L12.5 22" fill="none" stroke="#564a00" stroke-width="0.9" stroke-linejoin="round"/><path d="M13.7 10.7 L22 8.4 V16.8 L12.8 21.6Z" fill="#d6b90a"/><path d="M4.5 20.2 V12 Q6.5 10.5 8.5 12.5 V21.1 Z" fill="#f6f6f6" stroke="#564a00" stroke-width="0.8"/></g>
<g transform="translate(291.3 52.2)"><path d="M0.8 0.8 H22 V13 L18.5 16.5 H0.8 Z" fill="url(#gy)" stroke="#564a00" stroke-width="0.9" stroke-linejoin="round"/><path d="M18.5 16.5 L19 13.5 L22 13" fill="none" stroke="#564a00" stroke-width="0.9" stroke-linejoin="round"/><path d="M9.5 3.5 H3.5 V12.5 H9.5 M3.5 8 H8 M12 3.5 H17.5 V11 M12 8 H15 V12.5 H19.5" fill="none" stroke="#2a2400" stroke-width="1.5"/></g>
<path d="M325.5 50.5 H344.2 V66.5 L339 71.5 H325.5 Z" fill="#f7f7f7" stroke="#c9c9c9" stroke-width="1"/><path d="M339 71.5 L339.5 67 L344.2 66.5Z" fill="#c4c4c4"/>
<g transform="translate(328.0 53.5)"><path d="M0.5 4 L7 0.8 L13.5 4 L13.5 10.5 L7 13.8 L0.5 10.5 Z" fill="url(#gy)" stroke="#564a00" stroke-width="0.9" stroke-linejoin="round"/><path d="M0.5 4 L7 7 L13.5 4 M7 7 V13.8" fill="none" stroke="#564a00" stroke-width="0.9" stroke-linejoin="round"/><path d="M7.2 7.2 L13.2 4.4 V10.3 L7.2 13.4Z" fill="#d6b90a"/></g>
<g transform="translate(357.0 49.8)"><path d="M0.8 0.8 L3 0.3 L22 5 L22 21.5 L20 22 L0.8 16.5 Z" fill="url(#gy)" stroke="#564a00" stroke-width="0.9" stroke-linejoin="round"/><path d="M3.8 4.5 L9.3 5.9 V9.5 L3.8 8 Z M11.8 6.6 L18 8.2 V12 L11.8 10.3Z M3.8 11 L9.3 12.5 V16 L3.8 14.3Z M11.8 13.3 L18 15 V18.6 L11.8 16.8Z" fill="#f8f8f8" stroke="#564a00" stroke-width="0.8"/><path d="M20 6 V22" stroke="#564a00" stroke-width="0.8"/></g>
<g transform="translate(390.6 52.0)"><path d="M0.8 13.5 L7.5 8 L17.5 0.8 L21.5 8 L11.5 16.5 L7.5 10 Z" fill="url(#gy)" stroke="#564a00" stroke-width="0.9" stroke-linejoin="round"/><path d="M7.5 8 L11.5 16.5" stroke="#564a00" stroke-width="0.9" stroke-linejoin="round"/></g>
<g transform="translate(425.6 49.8)"><rect x="2.9" y="6" width="2.6" height="16.3" fill="url(#gy)" stroke="#564a00" stroke-width="0.9" stroke-linejoin="round"/><circle cx="4.2" cy="4.2" r="3.6" fill="url(#gy)" stroke="#564a00" stroke-width="0.9" stroke-linejoin="round"/><rect x="12.5" y="6" width="2.6" height="16.3" fill="url(#gy)" stroke="#564a00" stroke-width="0.9" stroke-linejoin="round"/><circle cx="13.8" cy="4.2" r="3.6" fill="url(#gy)" stroke="#564a00" stroke-width="0.9" stroke-linejoin="round"/></g>
<path d="M452.5 59.2 h8 l-4 4.2 z" fill="#7a7a7a"/>
<g transform="translate(469.4 49.8)"><rect x="8.8" y="17" width="2" height="5.5" fill="url(#gy)" stroke="#564a00" stroke-width="0.9" stroke-linejoin="round"/><circle cx="9.8" cy="9.8" r="9.3" fill="url(#gy)" stroke="#564a00" stroke-width="0.9" stroke-linejoin="round"/><path d="M9.8 0.5 A9.3 9.3 0 0 1 9.8 19.1 Z" fill="#d6b90a"/><path d="M10 1.5 L19 9.8 L10 18 Z" fill="#221c00"/><text x="2.2" y="12.8" font-family="Liberation Sans, sans-serif" font-size="9" fill="#332b00">A</text></g>
<g transform="translate(500.6 49.8)"><path d="M1.5 3.5 L8 0.8 L22 2.5 L22 16.5 L14.5 21.5 L1.5 18.5 Z" fill="#ecd21c" stroke="#5a4a00" stroke-width="1.6" stroke-dasharray="2.2 1.8"/><path d="M1.5 3.5 L14.5 6 L22 2.5 M14.5 6 V21.5" fill="none" stroke="#5a4a00" stroke-width="1.3" stroke-dasharray="2.2 1.8"/><circle cx="11.5" cy="10.5" r="5.6" fill="#f6e65a" stroke="#6a5800" stroke-width="0.8"/><circle cx="10" cy="8.5" r="1.8" fill="#fffbe0"/></g>
<g transform="translate(533.7 50.5)"><polygon points="11.2,3.5 23.0,6.0 23.0,8.8 11.2,6.0" fill="#d6b90a" stroke="#564a00" stroke-width="0.9" stroke-linejoin="round"/><polygon points="23.0,6.0 28.3,3.5 28.3,6.0 23.0,8.8" fill="#b89e00" stroke="#564a00" stroke-width="0.9" stroke-linejoin="round"/><polygon points="11.2,3.5 16.5,1.0 28.3,3.5 23.0,6.0" fill="#f6e545" stroke="#564a00" stroke-width="0.9" stroke-linejoin="round"/><polygon points="5.9,8.8 17.8,11.2 17.8,14.0 5.9,11.2" fill="#d6b90a" stroke="#564a00" stroke-width="0.9" stroke-linejoin="round"/><polygon points="17.8,11.2 23.0,8.8 23.0,11.2 17.8,14.0" fill="#b89e00" stroke="#564a00" stroke-width="0.9" stroke-linejoin="round"/><polygon points="5.9,8.8 11.3,6.2 23.0,8.8 17.8,11.2" fill="#f6e545" stroke="#564a00" stroke-width="0.9" stroke-linejoin="round"/><polygon points="0.7,14.0 12.5,16.5 12.5,19.2 0.7,16.5" fill="#d6b90a" stroke="#564a00" stroke-width="0.9" stroke-linejoin="round"/><polygon points="12.5,16.5 17.8,14.0 17.8,16.5 12.5,19.2" fill="#b89e00" stroke="#564a00" stroke-width="0.9" stroke-linejoin="round"/><polygon points="0.7,14.0 6.0,11.5 17.8,14.0 12.5,16.5" fill="#f6e545" stroke="#564a00" stroke-width="0.9" stroke-linejoin="round"/></g>
<g transform="translate(567.0 49.8)"><path d="M0.8 1.5 L2.5 0.8 L11 3.5 L11 6.5 L13.5 7.3 L13.5 4.5 L22 7 L22 21 L20.3 22 L13 19.5 L13 17 L10.5 16 L10.5 18.5 L0.8 15.5 Z" fill="url(#gy)" stroke="#564a00" stroke-width="0.9" stroke-linejoin="round"/><path d="M20.3 8 V22" stroke="#564a00" stroke-width="0.8"/><path d="M20.5 8 L21.8 7.3 V20.8 L20.5 21.6Z" fill="#d6b90a"/></g>
<path d="M597.0 59.2 h8 l-4 4.2 z" fill="#7a7a7a"/>
<g transform="translate(615.6 49.8)"><path d="M0.8 2 L3.5 0.8 L6 1.8 L6 10 L8.5 11 L13 8.5 L16.5 10 L16.5 19 L14 20.5 L12 19.5 L12 15.5 L9.5 17 L9.5 21 L7 22.2 L4.8 21 L4.8 16.5 L3 15.7 L3 19.5 L0.8 18.5 Z" fill="url(#gy)" stroke="#564a00" stroke-width="0.9" stroke-linejoin="round"/><path d="M3.3 2.5 V15.5 M5 12.3 L9.5 14 L16.5 10 M9.5 14 V17 M7 13.2 V22 M14 11.8 V20.5" fill="none" stroke="#564a00" stroke-width="0.8"/></g>
<g transform="translate(645.0 50.0)"><path d="M0.8 21.5 V4.7 L3.9 1.2 L7.0 4.7 V21.5 Z" fill="url(#gy)" stroke="#564a00" stroke-width="0.9" stroke-linejoin="round"/><path d="M3.9 2.2 V21.5" stroke="#564a00" stroke-width="0.8"/><path d="M5.6 5.2 V21" stroke="#d6b90a" stroke-width="1.6"/><path d="M8.3 21.5 V8.0 L11.4 4.5 L14.5 8.0 V21.5 Z" fill="url(#gy)" stroke="#564a00" stroke-width="0.9" stroke-linejoin="round"/><path d="M11.4 5.5 V21.5" stroke="#564a00" stroke-width="0.8"/><path d="M13.1 8.5 V21" stroke="#d6b90a" stroke-width="1.6"/><path d="M16.0 21.5 V11.0 L19.0 7.5 L22.0 11.0 V21.5 Z" fill="url(#gy)" stroke="#564a00" stroke-width="0.9" stroke-linejoin="round"/><path d="M19.0 8.5 V21.5" stroke="#564a00" stroke-width="0.8"/><path d="M20.7 11.5 V21" stroke="#d6b90a" stroke-width="1.6"/></g>
<g transform="translate(678.0 56.2)"><rect x="1" y="6" width="20.5" height="2.6" fill="url(#gy)" stroke="#564a00" stroke-width="0.9" stroke-linejoin="round"/><rect x="1" y="11.2" width="20.5" height="2.6" fill="url(#gy)" stroke="#564a00" stroke-width="0.9" stroke-linejoin="round"/><path d="M1.2 15.5 V3 L3.0 0.5 L4.8 3 V15.5 Z" fill="url(#gy)" stroke="#564a00" stroke-width="0.9" stroke-linejoin="round"/><path d="M9.5 15.5 V3 L11.3 0.5 L13.1 3 V15.5 Z" fill="url(#gy)" stroke="#564a00" stroke-width="0.9" stroke-linejoin="round"/><path d="M17.8 15.5 V3 L19.6 0.5 L21.4 3 V15.5 Z" fill="url(#gy)" stroke="#564a00" stroke-width="0.9" stroke-linejoin="round"/></g>
<g transform="translate(710.6 50.0)"><path d="M0.8 7 L22.5 0.8 L23 3 L18.5 4.5 L23 13.5 L21 14 L17 6.5 L16.5 16.5 H23 V19.5 H0.8 V16.5 H4 V8.5 L0.8 9 Z M6.3 8.3 V16.5 H14 L6.3 8.3 M8 7.3 L14.5 14.5 L14.8 5.3 Z" fill="url(#gy)" fill-rule="evenodd" stroke="#564a00" stroke-width="0.9" stroke-linejoin="round"/></g>
<g transform="translate(747.3 50.0)"><path d="M0.8 0.8 H15.8 V4 H10.3 V17.5 H15.8 V21 H0.8 V17.5 H6.3 V4 H0.8 Z" fill="url(#gy)" stroke="#564a00" stroke-width="0.9" stroke-linejoin="round"/><path d="M8.8 4 V17.5" stroke="#d6b90a" stroke-width="1.5"/></g>
<circle cx="791.6" cy="55.1" r="5" fill="url(#gy)" stroke="#564a00" stroke-width="0.9" stroke-linejoin="round"/><circle cx="790.3" cy="53.3" r="1.6" fill="#fff8b0"/>
<circle cx="782.0" cy="63.0" r="5" fill="url(#gy)" stroke="#564a00" stroke-width="0.9" stroke-linejoin="round"/><circle cx="780.7" cy="61.2" r="1.6" fill="#fff8b0"/>
<circle cx="793.7" cy="66.4" r="5" fill="url(#gy)" stroke="#564a00" stroke-width="0.9" stroke-linejoin="round"/><circle cx="792.4" cy="64.6" r="1.6" fill="#fff8b0"/>
<path d="M806.0 59.2 h8 l-4 4.2 z" fill="#7a7a7a"/>
<g transform="translate(822.2 52.2)"><rect x="0.8" y="0.8" width="21.3" height="17.7" fill="url(#gy)" stroke="#564a00" stroke-width="0.9" stroke-linejoin="round"/><path d="M0.8 5.2 H22 M0.8 9.6 H22 M0.8 14 H22 M6.5 0.8 V18.5" stroke="#564a00" stroke-width="0.9"/><rect x="1.3" y="14.4" width="20.3" height="3.8" fill="#d6b90a"/></g>
<g transform="translate(855.0 50.5)"><path d="M5.5 0.8 L18 4 Q22.5 6 22 12.5 Q21.5 19.5 17 20.5 L4.5 15.5 Q0.5 13.5 0.8 7.5 Q1.5 1 5.5 0.8Z" fill="url(#gy)" stroke="#564a00" stroke-width="0.9" stroke-linejoin="round"/><ellipse cx="5.3" cy="8.2" rx="4.4" ry="7.3" fill="#fbf08a" stroke="#564a00" stroke-width="0.9" stroke-linejoin="round" transform="rotate(8 5.3 8.2)"/><ellipse cx="5.3" cy="8.2" rx="2.3" ry="4.3" fill="#d6b90a" stroke="#564a00" stroke-width="0.9" stroke-linejoin="round" transform="rotate(8 5.3 8.2)"/></g>
<path d="M884.5 59.2 h8 l-4 4.2 z" fill="#7a7a7a"/>
<g transform="translate(899.7 50.8)"><path d="M3 0.8 L20 2.5 L20 4.5 L22.5 4.5 L22.5 15 L19.5 15.5 L18.5 21 L3 19.5 Z" fill="#a8a8a8" stroke="#8a8a8a" stroke-width="0.8"/><path d="M0.8 6 L14.5 5 L14.5 17.5 L0.8 18.5 Z" fill="#b4b4b4" stroke="#808080" stroke-width="0.9"/><path d="M14.5 5 L17.5 6.5 V19 L14.5 17.5" fill="#999" stroke="#808080" stroke-width="0.8"/><path d="M19.5 4.5 V15.5" stroke="#f4f4f4" stroke-width="1.8" stroke-dasharray="3 2"/></g>
<g transform="translate(933.0 50.8)"><path d="M3 0.8 L20 2.5 L20 4.5 L22.5 4.5 L22.5 15 L19.5 15.5 L18.5 21 L3 19.5 Z" fill="#a8a8a8" stroke="#8a8a8a" stroke-width="0.8"/><path d="M0.8 6 L14.5 5 L14.5 17.5 L0.8 18.5 Z" fill="#b4b4b4" stroke="#808080" stroke-width="0.9"/><path d="M14.5 5 L17.5 6.5 V19 L14.5 17.5" fill="#999" stroke="#808080" stroke-width="0.8"/><path d="M19.5 4.5 V15.5" stroke="#f4f4f4" stroke-width="1.8" stroke-dasharray="3 2"/></g>
<path d="M973.9 50.3 H980.1 V57.7 H987.7 V64 H980.1 V71.5 H973.9 V64 H966.3 V57.7 H973.9 Z" fill="#b6b6b6" stroke="#9c9c9c" stroke-width="1"/>
<rect x="999.6" y="57.8" width="21.4" height="6.2" fill="#b6b6b6" stroke="#9c9c9c" stroke-width="1"/>
<g transform="translate(1032.0 49.8)"><path d="M1 12.5 Q1.5 3 10 1 Q17 0.3 19.5 7 Q20.5 10 20.5 14 Q23.5 16 22.3 19.5 Q20 23 14.5 21.5 Q6 19 1.5 15 Q0.3 13.8 1 12.5Z" fill="#3b6db5" stroke="#1d437f" stroke-width="0.9"/><path d="M1.2 13 Q8 18.5 20.5 17" fill="none" stroke="#1d437f" stroke-width="1"/><path d="M9 1.8 Q11.5 4 12.5 7.5 M12 1.2 Q14.5 3.5 15.5 7 M15 1.8 Q17.5 4 18 7.5" fill="none" stroke="#14305f" stroke-width="1.3"/><path d="M2 14.5 Q9 20 22 19 Q20 22.5 14.5 21.3 Q6 19 2 14.5Z" fill="#5a8fd8"/></g>
<rect x="2" y="92" width="1" height="1" fill="#bdbdbd"/><rect x="3" y="93" width="1" height="1" fill="#fdfdfd"/><rect x="5" y="92" width="1" height="1" fill="#bdbdbd"/><rect x="6" y="93" width="1" height="1" fill="#fdfdfd"/><rect x="2" y="95" width="1" height="1" fill="#bdbdbd"/><rect x="3" y="96" width="1" height="1" fill="#fdfdfd"/><rect x="5" y="95" width="1" height="1" fill="#bdbdbd"/><rect x="6" y="96" width="1" height="1" fill="#fdfdfd"/><rect x="2" y="98" width="1" height="1" fill="#bdbdbd"/><rect x="3" y="99" width="1" height="1" fill="#fdfdfd"/><rect x="5" y="98" width="1" height="1" fill="#bdbdbd"/><rect x="6" y="99" width="1" height="1" fill="#fdfdfd"/><rect x="2" y="101" width="1" height="1" fill="#bdbdbd"/><rect x="3" y="102" width="1" height="1" fill="#fdfdfd"/><rect x="5" y="101" width="1" height="1" fill="#bdbdbd"/><rect x="6" y="102" width="1" height="1" fill="#fdfdfd"/><rect x="2" y="104" width="1" height="1" fill="#bdbdbd"/><rect x="3" y="105" width="1" height="1" fill="#fdfdfd"/><rect x="5" y="104" width="1" height="1" fill="#bdbdbd"/><rect x="6" y="105" width="1" height="1" fill="#fdfdfd"/><rect x="2" y="107" width="1" height="1" fill="#bdbdbd"/><rect x="3" y="108" width="1" height="1" fill="#fdfdfd"/><rect x="5" y="107" width="1" height="1" fill="#bdbdbd"/><rect x="6" y="108" width="1" height="1" fill="#fdfdfd"/>
<path d="M21 100 V95.5 Q21 90.3 26 90.3 Q31 90.3 31 95.5 V100" fill="none" stroke="#0b6f7a" stroke-width="3.6"/><path d="M21 100 V95.5 Q21 90.3 26 90.3 Q31 90.3 31 95.5 V100" fill="none" stroke="url(#gt)" stroke-width="1.8"/>
<rect x="18.5" y="98.5" width="15" height="12" rx="1" fill="#1fb5c1" stroke="#0b6f7a" stroke-width="0.9" stroke-linejoin="round"/><path d="M20 102 H32 M20 104.8 H32 M20 107.6 H32" stroke="#0b6f7a" stroke-width="0.8"/>
<path d="M55 102.5 L66.8 90.8 L69.3 93.3 L57.5 105 Z" fill="url(#gt)" stroke="#0b6f7a" stroke-width="0.9" stroke-linejoin="round"/><circle cx="53.7" cy="104.7" r="4.8" fill="#1fb5c1" stroke="#0b6f7a" stroke-width="0.9" stroke-linejoin="round"/>
<path d="M82 106.5 L100.3 90.5 L102.8 93 L84.5 109 Z" fill="url(#gt)" stroke="#0b6f7a" stroke-width="0.9" stroke-linejoin="round"/><circle cx="92.2" cy="99.8" r="5.5" fill="#1fb5c1" stroke="#0b6f7a" stroke-width="0.9" stroke-linejoin="round"/>
<circle cx="125.6" cy="99.8" r="10.2" fill="url(#gt)" stroke="#0b6f7a" stroke-width="0.9" stroke-linejoin="round"/><circle cx="125.6" cy="99.8" r="6" fill="#f4f4f4" stroke="#0b6f7a" stroke-width="0.8"/><circle cx="125.6" cy="99.8" r="3.6" fill="url(#gt)" stroke="#0b6f7a" stroke-width="0.9" stroke-linejoin="round"/>
<circle cx="158.7" cy="99.7" r="7.5" fill="none" stroke="#0b6f7a" stroke-width="1.3"/>
<circle cx="158.7" cy="92.2" r="3.5" fill="url(#gt)" stroke="#0b6f7a" stroke-width="0.9" stroke-linejoin="round"/>
<circle cx="151.2" cy="99.7" r="3.5" fill="url(#gt)" stroke="#0b6f7a" stroke-width="0.9" stroke-linejoin="round"/>
<circle cx="166.2" cy="99.7" r="3.5" fill="url(#gt)" stroke="#0b6f7a" stroke-width="0.9" stroke-linejoin="round"/>
<circle cx="158.7" cy="107.2" r="3.5" fill="url(#gt)" stroke="#0b6f7a" stroke-width="0.9" stroke-linejoin="round"/>
<path d="M184 89.8 L191 96.3 L198 89.8 L201.3 93 L194.5 100 L201.3 107 L198 110.3 L191 103.6 L184 110.3 L180.7 107 L187.5 100 L180.7 93 Z" fill="url(#gt)" stroke="#0b6f7a" stroke-width="0.9" stroke-linejoin="round"/>
<path d="M221.7 92 H226.2 V103.3 H235 V107.8 H213.2 V103.3 H221.7 Z" fill="url(#gt)" stroke="#0b6f7a" stroke-width="0.9" stroke-linejoin="round"/>
<circle cx="250.0" cy="100" r="3" fill="url(#gt)" stroke="#0b6f7a" stroke-width="0.9" stroke-linejoin="round"/>
<circle cx="257.3" cy="100" r="3" fill="url(#gt)" stroke="#0b6f7a" stroke-width="0.9" stroke-linejoin="round"/>
<circle cx="264.7" cy="100" r="3" fill="url(#gt)" stroke="#0b6f7a" stroke-width="0.9" stroke-linejoin="round"/>
<path d="M286.3 90 L301 99 L299 102.3 L284.3 93.3 Z M282 97 L297 106.5 L295 109.8 L280 100.3 Z" fill="url(#gt)" stroke="#0b6f7a" stroke-width="0.9" stroke-linejoin="round"/>
<path d="M319.5 93 L324.5 89.3 L334.2 89.3 L334.2 101.5 L329 106.3 L319.5 106.3 Z" fill="url(#gt)" stroke="#0b6f7a" stroke-width="0.9" stroke-linejoin="round"/><path d="M319.5 93 H329 L334.2 89.3 M329 93 V106.3" fill="none" stroke="#0b6f7a" stroke-width="0.9" stroke-linejoin="round"/><path d="M329.3 93.2 L334 89.9 V101.4 L329.3 105.8Z" fill="#149aa5"/>
<circle cx="318" cy="105.5" r="4.6" fill="#1fb5c1" stroke="#0b6f7a" stroke-width="0.9" stroke-linejoin="round"/>
<path d="M348 96.5 L363 105 L361 108.5 L346 100 Z" fill="url(#gt)" stroke="#0b6f7a" stroke-width="0.9" stroke-linejoin="round"/><circle cx="360" cy="94" r="3.4" fill="url(#gt)" stroke="#0b6f7a" stroke-width="0.9" stroke-linejoin="round"/>
<path d="M386.8 92 H391.5 V97.6 H397.3 V102.3 H391.5 V108 H386.8 V102.3 H381 V97.6 H386.8 Z" fill="url(#gt)" stroke="#0b6f7a" stroke-width="0.9" stroke-linejoin="round"/>
<path d="M417.5 90.5 V110.5 M427.5 90.5 V110.5 M412 95.5 H433 M412 105.5 H433" stroke="#0b6f7a" stroke-width="3.6" stroke-linecap="round"/><path d="M417.5 90.5 V110.5 M427.5 90.5 V110.5 M412 95.5 H433 M412 105.5 H433" stroke="url(#gt)" stroke-width="2" stroke-linecap="round"/>
<rect x="444.5" y="89.2" width="21.5" height="21.5" rx="1" fill="url(#gt)" stroke="#0b6f7a" stroke-width="0.9" stroke-linejoin="round"/><circle cx="451.6" cy="103.2" r="3.3" fill="url(#gt)" stroke="#0b6f7a" stroke-width="0.9" stroke-linejoin="round"/>
<path d="M484 97.5 H497 M485.5 97.5 V107 H489.5 M496 96.5 V101" fill="none" stroke="#0b6f7a" stroke-width="1.8"/><path d="M484 97.5 H497 M485.5 97.5 V107 H489.5" fill="none" stroke="#5fe0e8" stroke-width="0.8"/>
<text x="484.5" y="94.6" font-family="Liberation Sans, sans-serif" font-size="6.8" font-weight="bold" fill="#0b4f58">1.00</text>
<text transform="translate(483 108.5) rotate(-90)" font-family="Liberation Sans, sans-serif" font-size="6.8" font-weight="bold" fill="#0b4f58">1.00</text>
<path d="M514.8 90 V110.3 M521.5 90 V110.3 M528.3 90 V110.3 M510.8 93.3 H532 M510.8 100 H532 M510.8 106.6 H532" stroke="#555" stroke-width="3" stroke-linecap="round"/><path d="M514.8 90 V110.3 M521.5 90 V110.3 M528.3 90 V110.3 M510.8 93.3 H532 M510.8 100 H532 M510.8 106.6 H532" stroke="#fff" stroke-width="1.4" stroke-linecap="round"/>
<rect x="546" y="92" width="1" height="1" fill="#bdbdbd"/><rect x="547" y="93" width="1" height="1" fill="#fdfdfd"/><rect x="549" y="92" width="1" height="1" fill="#bdbdbd"/><rect x="550" y="93" width="1" height="1" fill="#fdfdfd"/><rect x="546" y="95" width="1" height="1" fill="#bdbdbd"/><rect x="547" y="96" width="1" height="1" fill="#fdfdfd"/><rect x="549" y="95" width="1" height="1" fill="#bdbdbd"/><rect x="550" y="96" width="1" height="1" fill="#fdfdfd"/><rect x="546" y="98" width="1" height="1" fill="#bdbdbd"/><rect x="547" y="99" width="1" height="1" fill="#fdfdfd"/><rect x="549" y="98" width="1" height="1" fill="#bdbdbd"/><rect x="550" y="99" width="1" height="1" fill="#fdfdfd"/><rect x="546" y="101" width="1" height="1" fill="#bdbdbd"/><rect x="547" y="102" width="1" height="1" fill="#fdfdfd"/><rect x="549" y="101" width="1" height="1" fill="#bdbdbd"/><rect x="550" y="102" width="1" height="1" fill="#fdfdfd"/><rect x="546" y="104" width="1" height="1" fill="#bdbdbd"/><rect x="547" y="105" width="1" height="1" fill="#fdfdfd"/><rect x="549" y="104" width="1" height="1" fill="#bdbdbd"/><rect x="550" y="105" width="1" height="1" fill="#fdfdfd"/><rect x="546" y="107" width="1" height="1" fill="#bdbdbd"/><rect x="547" y="108" width="1" height="1" fill="#fdfdfd"/><rect x="549" y="107" width="1" height="1" fill="#bdbdbd"/><rect x="550" y="108" width="1" height="1" fill="#fdfdfd"/>
<path d="M562.7 107.5 L577.9 92.5" fill="none" stroke="#5a5a5a" stroke-width="2.6" stroke-linecap="round"/><path d="M562.7 107.5 L577.9 92.5" fill="none" stroke="#fff" stroke-width="1.2" stroke-linecap="round"/>
<circle cx="577.9" cy="92.5" r="3.4" fill="#f2d21c" stroke="#6a5a00" stroke-width="0.9"/><circle cx="562.7" cy="107.5" r="3.4" fill="#f2d21c" stroke="#6a5a00" stroke-width="0.9"/>
<path d="M595.6 107.5 L599.4 97.5 L605.6 107.5 L611 92.2" fill="none" stroke="#5a5a5a" stroke-width="2.6" stroke-linecap="round"/><path d="M595.6 107.5 L599.4 97.5 L605.6 107.5 L611 92.2" fill="none" stroke="#fff" stroke-width="1.2" stroke-linecap="round"/>
<circle cx="611.0" cy="92.2" r="3.4" fill="#f2d21c" stroke="#6a5a00" stroke-width="0.9"/><circle cx="599.4" cy="97.5" r="3.4" fill="#f2d21c" stroke="#6a5a00" stroke-width="0.9"/><circle cx="595.6" cy="107.5" r="3.4" fill="#f2d21c" stroke="#6a5a00" stroke-width="0.9"/><circle cx="605.6" cy="107.5" r="3.4" fill="#f2d21c" stroke="#6a5a00" stroke-width="0.9"/>
<path d="M629 89 V94 M643 106.9 H647" stroke="#555" stroke-width="1"/>
<path d="M629 97 Q630 105 639.4 106.9" fill="none" stroke="#5a5a5a" stroke-width="2.2" stroke-linecap="round"/><path d="M629 97 Q630 105 639.4 106.9" fill="none" stroke="#fff" stroke-width="0.8" stroke-linecap="round"/>
<path d="M626 106.5 l3 3 M629 103 v3" stroke="#444" stroke-width="1"/>
<circle cx="629.0" cy="97.0" r="3.3" fill="#f2d21c" stroke="#a02020" stroke-width="0.9"/><circle cx="639.4" cy="106.9" r="3.3" fill="#f2d21c" stroke="#a02020" stroke-width="0.9"/>
<path d="M662.2 92.2 Q675 93 676.5 106.9" fill="none" stroke="#5a5a5a" stroke-width="2.6" stroke-linecap="round"/><path d="M662.2 92.2 Q675 93 676.5 106.9" fill="none" stroke="#fff" stroke-width="1.2" stroke-linecap="round"/>
<circle cx="662.2" cy="92.2" r="3.4" fill="#f2d21c" stroke="#6a5a00" stroke-width="0.9"/><circle cx="662.2" cy="106.9" r="3.4" fill="#f2d21c" stroke="#6a5a00" stroke-width="0.9"/><circle cx="676.5" cy="106.9" r="3.4" fill="#f2d21c" stroke="#6a5a00" stroke-width="0.9"/>
<path d="M687.0 98.2 h8 l-4 4.2 z" fill="#7a7a7a"/>
<circle cx="713.4" cy="100" r="9.2" fill="none" stroke="#5a5a5a" stroke-width="2.8"/><circle cx="713.4" cy="100" r="9.2" fill="none" stroke="#fff" stroke-width="1.2"/>
<circle cx="713.4" cy="100.0" r="3.4" fill="#f2d21c" stroke="#6a5a00" stroke-width="0.9"/><circle cx="721.9" cy="100.0" r="3.4" fill="#f2d21c" stroke="#6a5a00" stroke-width="0.9"/>
<ellipse cx="747.2" cy="99.8" rx="10.5" ry="3.8" fill="none" stroke="#5a5a5a" stroke-width="2.6"/><ellipse cx="747.2" cy="99.8" rx="10.5" ry="3.8" fill="none" stroke="#fff" stroke-width="1.1"/>
<circle cx="755.0" cy="92.5" r="3.4" fill="#f2d21c" stroke="#6a5a00" stroke-width="0.9"/><circle cx="740.0" cy="107.5" r="3.4" fill="#f2d21c" stroke="#6a5a00" stroke-width="0.9"/>
<rect x="772.8" y="92.7" width="15" height="14.6" fill="none" stroke="#5a5a5a" stroke-width="2.8"/><rect x="772.8" y="92.7" width="15" height="14.6" fill="none" stroke="#fff" stroke-width="1.2"/>
<circle cx="788.0" cy="92.5" r="3.4" fill="#f2d21c" stroke="#6a5a00" stroke-width="0.9"/><circle cx="772.7" cy="107.5" r="3.4" fill="#f2d21c" stroke="#6a5a00" stroke-width="0.9"/>
<path d="M814 89.5 L822.5 97 L818.5 108.5 L806 108 L803 96 Z" fill="none" stroke="#5a5a5a" stroke-width="2.8" stroke-linejoin="round"/><path d="M814 89.5 L822.5 97 L818.5 108.5 L806 108 L803 96 Z" fill="none" stroke="#fff" stroke-width="1.2"/>
<circle cx="812.5" cy="100.2" r="3.4" fill="#f2d21c" stroke="#6a5a00" stroke-width="0.9"/><circle cx="821.2" cy="98.5" r="3.4" fill="#f2d21c" stroke="#6a5a00" stroke-width="0.9"/>
<path d="M838.5 104.1 Q841 93 846 92.9 Q851 93 852.7 106" fill="none" stroke="#5a5a5a" stroke-width="2.6" stroke-linecap="round"/><path d="M838.5 104.1 Q841 93 846 92.9 Q851 93 852.7 106" fill="none" stroke="#fff" stroke-width="1.2" stroke-linecap="round"/>
<circle cx="846.0" cy="92.9" r="3.4" fill="#f2d21c" stroke="#6a5a00" stroke-width="0.9"/><circle cx="838.5" cy="104.1" r="3.4" fill="#f2d21c" stroke="#6a5a00" stroke-width="0.9"/><circle cx="852.7" cy="106.0" r="3.4" fill="#f2d21c" stroke="#6a5a00" stroke-width="0.9"/>
<path d="M871.6 91.6 L873 107 M886.9 91.6 L885.5 107" stroke="#666" stroke-width="0.9"/>
<path d="M871.6 107.5 Q872 96 879.2 96 Q886.5 96 886.9 107.5" fill="none" stroke="#5a5a5a" stroke-width="2.4" stroke-linecap="round"/><path d="M871.6 107.5 Q872 96 879.2 96 Q886.5 96 886.9 107.5" fill="none" stroke="#fff" stroke-width="1.0" stroke-linecap="round"/>
<text x="876.6" y="108" font-family="Liberation Sans, sans-serif" font-size="8" font-weight="bold" fill="#555">3</text>
<rect x="869.2" y="89.2" width="4.8" height="4.8" fill="#f2d21c" stroke="#6a5a00" stroke-width="0.9"/><rect x="884.5" y="89.2" width="4.8" height="4.8" fill="#f2d21c" stroke="#6a5a00" stroke-width="0.9"/>
<circle cx="871.6" cy="107.5" r="3.4" fill="#f2d21c" stroke="#6a5a00" stroke-width="0.9"/><circle cx="886.9" cy="107.5" r="3.4" fill="#f2d21c" stroke="#6a5a00" stroke-width="0.9"/>
<path d="M897.2 98.2 h8 l-4 4.2 z" fill="#7a7a7a"/>
<circle cx="924.4" cy="100.0" r="3.5" fill="#f2d21c" stroke="#6a5a00" stroke-width="0.9"/>
<polygon points="946.2,97.2 958.2,90.4 958.2,108.2 955.7,110.7 946.2,110.7" fill="#e9cf18" stroke="#564a00" stroke-width="0.9" stroke-linejoin="round"/>
<polygon points="959.2,90.4 968.0,89.0 968.0,91.3 959.2,96.1" fill="url(#gy)" stroke="#564a00" stroke-width="0.9" stroke-linejoin="round"/>
<polygon points="959.2,100.3 968.0,96.1 968.0,102.7 956.5,110.5 959.2,107.4" fill="url(#gy)" stroke="#564a00" stroke-width="0.9" stroke-linejoin="round"/>
<text transform="translate(978.2 110.6) scale(1.32 1)" font-family="Liberation Serif, serif" font-style="italic" font-size="32.5" fill="url(#gy)" stroke="#6a5a00" stroke-width="0.8">S</text>
<defs><pattern id="hp" width="5" height="5" patternUnits="userSpaceOnUse" patternTransform="rotate(40)"><rect width="5" height="5" fill="#fff"/><rect width="5" height="2.6" fill="#111"/></pattern></defs>
<path d="M1024 90 H1032.7 V109.8 H1013.5 V100.5 H1024 Z" fill="url(#hp)" stroke="#564a00" stroke-width="3.4" stroke-linejoin="round"/><path d="M1024 90 H1032.7 V109.8 H1013.5 V100.5 H1024 Z" fill="none" stroke="url(#gy)" stroke-width="1.8" stroke-linejoin="round"/>
<rect x="1049" y="92" width="1" height="1" fill="#bdbdbd"/><rect x="1050" y="93" width="1" height="1" fill="#fdfdfd"/><rect x="1052" y="92" width="1" height="1" fill="#bdbdbd"/><rect x="1053" y="93" width="1" height="1" fill="#fdfdfd"/><rect x="1049" y="95" width="1" height="1" fill="#bdbdbd"/><rect x="1050" y="96" width="1" height="1" fill="#fdfdfd"/><rect x="1052" y="95" width="1" height="1" fill="#bdbdbd"/><rect x="1053" y="96" width="1" height="1" fill="#fdfdfd"/><rect x="1049" y="98" width="1" height="1" fill="#bdbdbd"/><rect x="1050" y="99" width="1" height="1" fill="#fdfdfd"/><rect x="1052" y="98" width="1" height="1" fill="#bdbdbd"/><rect x="1053" y="99" width="1" height="1" fill="#fdfdfd"/><rect x="1049" y="101" width="1" height="1" fill="#bdbdbd"/><rect x="1050" y="102" width="1" height="1" fill="#fdfdfd"/><rect x="1052" y="101" width="1" height="1" fill="#bdbdbd"/><rect x="1053" y="102" width="1" height="1" fill="#fdfdfd"/><rect x="1049" y="104" width="1" height="1" fill="#bdbdbd"/><rect x="1050" y="105" width="1" height="1" fill="#fdfdfd"/><rect x="1052" y="104" width="1" height="1" fill="#bdbdbd"/><rect x="1053" y="105" width="1" height="1" fill="#fdfdfd"/><rect x="1049" y="107" width="1" height="1" fill="#bdbdbd"/><rect x="1050" y="108" width="1" height="1" fill="#fdfdfd"/><rect x="1052" y="107" width="1" height="1" fill="#bdbdbd"/><rect x="1053" y="108" width="1" height="1" fill="#fdfdfd"/>
<text transform="translate(1061.5 107.5) scale(1.22 1)" font-family="Liberation Serif, DejaVu Serif, serif" font-style="italic" font-weight="bold" font-size="24.5" fill="url(#gy)" stroke="#6a5a00" stroke-width="0.8">A</text>
<text x="1096" y="96" font-family="Liberation Serif, serif" font-size="9.5" font-weight="bold" fill="#999" stroke="#666" stroke-width="0.3">1.00</text>
<path d="M1096.7 108 V99.5 H1114 V108" fill="none" stroke="#5a5a5a" stroke-width="2.4" stroke-linecap="round"/><path d="M1096.7 108 V99.5 H1114 V108" fill="none" stroke="#fff" stroke-width="1.0" stroke-linecap="round"/>
<circle cx="1105.3" cy="99.3" r="2.4" fill="#f2d21c" stroke="#6a5a00" stroke-width="0.9"/><circle cx="1096.7" cy="108.3" r="2.6" fill="#f2d21c" stroke="#6a5a00" stroke-width="0.9"/><circle cx="1114.0" cy="108.3" r="2.6" fill="#f2d21c" stroke="#6a5a00" stroke-width="0.9"/>
<path d="M1127 92 H1139 L1142.5 95.5 V102.5 H1127 Z" fill="#eeeeea" stroke="#aaa" stroke-width="0.9"/><path d="M1129 96.5 H1137 M1129 99 H1137" stroke="#444" stroke-width="1.3"/><path d="M1138 95 L1145.8 104" stroke="#777" stroke-width="1.2"/>
<circle cx="1145.8" cy="106.8" r="2.8" fill="#f2d21c" stroke="#222" stroke-width="0.9"/>
<text transform="translate(1160 107.8) scale(1.22 1)" font-family="Liberation Serif, DejaVu Serif, serif" font-style="italic" font-weight="bold" font-size="24.5" fill="url(#gy)" stroke="#6a5a00" stroke-width="0.8">A</text>
<path d="M1176.5 91.5 L1181.5 95.5 L1174 104.5 L1168.5 106.5 L1169.5 100.5 Z" fill="#e8c020" stroke="#6a5a00" stroke-width="0.8"/><path d="M1168.5 106.5 l1 -3 l2 1.8z" fill="#222"/><path d="M1173 95.5 l5 4 M1174.8 93.5 l5 4" stroke="#7a5a00" stroke-width="0.8"/>
<rect x="1197" y="92" width="1" height="1" fill="#bdbdbd"/><rect x="1198" y="93" width="1" height="1" fill="#fdfdfd"/><rect x="1200" y="92" width="1" height="1" fill="#bdbdbd"/><rect x="1201" y="93" width="1" height="1" fill="#fdfdfd"/><rect x="1197" y="95" width="1" height="1" fill="#bdbdbd"/><rect x="1198" y="96" width="1" height="1" fill="#fdfdfd"/><rect x="1200" y="95" width="1" height="1" fill="#bdbdbd"/><rect x="1201" y="96" width="1" height="1" fill="#fdfdfd"/><rect x="1197" y="98" width="1" height="1" fill="#bdbdbd"/><rect x="1198" y="99" width="1" height="1" fill="#fdfdfd"/><rect x="1200" y="98" width="1" height="1" fill="#bdbdbd"/><rect x="1201" y="99" width="1" height="1" fill="#fdfdfd"/><rect x="1197" y="101" width="1" height="1" fill="#bdbdbd"/><rect x="1198" y="102" width="1" height="1" fill="#fdfdfd"/><rect x="1200" y="101" width="1" height="1" fill="#bdbdbd"/><rect x="1201" y="102" width="1" height="1" fill="#fdfdfd"/><rect x="1197" y="104" width="1" height="1" fill="#bdbdbd"/><rect x="1198" y="105" width="1" height="1" fill="#fdfdfd"/><rect x="1200" y="104" width="1" height="1" fill="#bdbdbd"/><rect x="1201" y="105" width="1" height="1" fill="#fdfdfd"/><rect x="1197" y="107" width="1" height="1" fill="#bdbdbd"/><rect x="1198" y="108" width="1" height="1" fill="#fdfdfd"/><rect x="1200" y="107" width="1" height="1" fill="#bdbdbd"/><rect x="1201" y="108" width="1" height="1" fill="#fdfdfd"/>
<path d="M1214.5 92 L1224.5 105 M1226 92 L1216 105" stroke="#777" stroke-width="1.5" fill="none"/><circle cx="1215.2" cy="106.3" r="2.3" fill="none" stroke="#777" stroke-width="1.3"/><circle cx="1225.3" cy="106.3" r="2.3" fill="none" stroke="#777" stroke-width="1.3"/>
<path d="M1245 92.3 H1251 V103.5 H1245 Z" fill="#f0f0f0" stroke="#888" stroke-width="1.4"/><path d="M1249.5 94.5 H1255.5 L1259.5 98.5 V108 H1249.5 Z" fill="#f4f4f4" stroke="#888" stroke-width="1.5"/><path d="M1255.5 94.5 V98.5 H1259.5" fill="none" stroke="#888" stroke-width="1"/>
<path d="M1289.0 97 l2.8 3 l-2.8 3 M1293.0 97 l2.8 3 l-2.8 3" fill="none" stroke="#555" stroke-width="1.2"/>
<path d="M1351.0 97 l2.8 3 l-2.8 3 M1355.0 97 l2.8 3 l-2.8 3" fill="none" stroke="#555" stroke-width="1.2"/>
<rect x="1306" y="92" width="1" height="1" fill="#bdbdbd"/><rect x="1307" y="93" width="1" height="1" fill="#fdfdfd"/><rect x="1309" y="92" width="1" height="1" fill="#bdbdbd"/><rect x="1310" y="93" width="1" height="1" fill="#fdfdfd"/><rect x="1306" y="95" width="1" height="1" fill="#bdbdbd"/><rect x="1307" y="96" width="1" height="1" fill="#fdfdfd"/><rect x="1309" y="95" width="1" height="1" fill="#bdbdbd"/><rect x="1310" y="96" width="1" height="1" fill="#fdfdfd"/><rect x="1306" y="98" width="1" height="1" fill="#bdbdbd"/><rect x="1307" y="99" width="1" height="1" fill="#fdfdfd"/><rect x="1309" y="98" width="1" height="1" fill="#bdbdbd"/><rect x="1310" y="99" width="1" height="1" fill="#fdfdfd"/><rect x="1306" y="101" width="1" height="1" fill="#bdbdbd"/><rect x="1307" y="102" width="1" height="1" fill="#fdfdfd"/><rect x="1309" y="101" width="1" height="1" fill="#bdbdbd"/><rect x="1310" y="102" width="1" height="1" fill="#fdfdfd"/><rect x="1306" y="104" width="1" height="1" fill="#bdbdbd"/><rect x="1307" y="105" width="1" height="1" fill="#fdfdfd"/><rect x="1309" y="104" width="1" height="1" fill="#bdbdbd"/><rect x="1310" y="105" width="1" height="1" fill="#fdfdfd"/><rect x="1306" y="107" width="1" height="1" fill="#bdbdbd"/><rect x="1307" y="108" width="1" height="1" fill="#fdfdfd"/><rect x="1309" y="107" width="1" height="1" fill="#bdbdbd"/><rect x="1310" y="108" width="1" height="1" fill="#fdfdfd"/>
<circle cx="1329.8" cy="99.9" r="9" fill="#dc4457"/>
</svg>
<div class="txt" style="left:0;top:122px;color:#555">Combo View</div>
<svg class="abs" style="left:473px;top:124px" width="28" height="12" viewBox="0 0 28 12"><rect x="1.5" y="1.5" width="9" height="9" rx="1.5" fill="none" stroke="#444" stroke-width="1.2"/><rect x="3.5" y="5" width="4" height="3.5" fill="none" stroke="#444" stroke-width="1"/><rect x="5.5" y="3" width="3.5" height="3.5" fill="#efefef" stroke="#444" stroke-width="1"/><rect x="15.5" y="1.5" width="10" height="9" rx="1.5" fill="none" stroke="#333" stroke-width="1.3"/><path d="M18 3.5 L23 8.5 M23 3.5 L18 8.5" stroke="#222" stroke-width="1.8"/></svg>
<div class="abs" style="left:0;top:164px;width:500px;height:1px;background:#b8b8b8"></div>
<div class="abs" style="left:0;top:139px;width:57px;height:26px;box-sizing:border-box;border:1px solid #b8b8b8;border-bottom:none;border-left:none;border-radius:0 3px 0 0;background:#fafafa"></div>
<div class="txt" style="left:9px;top:145px;color:#4a4a4a">Model</div>
<div class="abs" style="left:57px;top:141px;width:57px;height:23px;box-sizing:border-box;border:1px solid #b8b8b8;border-bottom:none;border-radius:3px 3px 0 0;background:linear-gradient(#ececec,#dedede)"></div>
<div class="txt" style="left:69px;top:146px;color:#4a4a4a">Tasks</div>
<div class="abs" style="left:0;top:167px;width:499px;height:206px;box-sizing:border-box;border:1px solid #b4b4b4;border-left:none;background:#fcfcfc"></div>
<div class="hdr" style="left:0;top:168px;width:229px">Labels &amp; Attributes</div>
<div class="hdr" style="left:229px;top:168px;width:82px">Description</div>
<div class="abs" style="left:311px;top:168px;width:172px;height:18px;background:#f4f4f4"></div>
<div class="abs" style="left:484px;top:168px;width:14px;height:204px;background:#fafafa;border-left:1px solid #c4c4c4;box-sizing:border-box"></div>
<div class="abs" style="left:484px;top:181px;width:14px;height:1px;background:#cfcfcf"></div>
<div class="abs" style="left:484px;top:358px;width:14px;height:1px;background:#cfcfcf"></div>
<div class="abs" style="left:485px;top:182px;width:13px;height:114px;box-sizing:border-box;border:1px solid #d2d2d2;background:#e3e3e3"></div>
<svg class="abs" style="left:484px;top:168px" width="15" height="205"><path d="M3.5 9.5 L7.5 4.5 L11.5 9.5 Z M3.5 195 L7.5 200 L11.5 195 Z" fill="#444"/></svg>
<div class="abs" style="left:500px;top:164px;width:1px;height:424px;background:#c4c4c4"></div>
<div class="row" style="top:187px">Exterior Slabs</div>
<svg class="abs" style="left:43px;top:187px" width="16" height="16" viewBox="0 0 16 16"><path d="M2.5 3.5 H7.5 V5.5 H14 V14 H2.5 Z" fill="#fff" stroke="#111" stroke-width="1.3"/><path d="M2.5 6 H14" stroke="#111" stroke-width="1.8"/></svg>
<svg class="abs" style="left:26px;top:191px" width="8" height="10"><path d="M2 1.5 L6.5 5 L2 8.5 Z" fill="#5e5e5e"/></svg>
<div class="row" style="top:205px">Interior Walls</div>
<svg class="abs" style="left:43px;top:205px" width="16" height="16" viewBox="0 0 16 16"><path d="M2.5 3.5 H7.5 V5.5 H14 V14 H2.5 Z" fill="#fff" stroke="#111" stroke-width="1.3"/><path d="M2.5 6 H14" stroke="#111" stroke-width="1.8"/></svg>
<svg class="abs" style="left:26px;top:209px" width="8" height="10"><path d="M2 1.5 L6.5 5 L2 8.5 Z" fill="#5e5e5e"/></svg>
<div class="row" style="top:223px">Front Gate</div>
<svg class="abs" style="left:43px;top:223px" width="16" height="16" viewBox="0 0 16 16"><path d="M2.5 3.5 H7.5 V5.5 H14 V14 H2.5 Z" fill="#fff" stroke="#7a7a7a" stroke-width="1.3"/><path d="M2.5 6 H14" stroke="#7a7a7a" stroke-width="1.4"/></svg>
<svg class="abs" style="left:26px;top:227px" width="8" height="10"><path d="M2 1.5 L6.5 5 L2 8.5 Z" fill="#5e5e5e"/></svg>
<div class="row" style="top:241px">Boundary</div>
<svg class="abs" style="left:43px;top:241px" width="16" height="16" viewBox="0 0 16 16"><path d="M2.5 3.5 H7.5 V5.5 H14 V14 H2.5 Z" fill="#fff" stroke="#7a7a7a" stroke-width="1.3"/><path d="M2.5 6 H14" stroke="#7a7a7a" stroke-width="1.4"/></svg>
<svg class="abs" style="left:26px;top:245px" width="8" height="10"><path d="M2 1.5 L6.5 5 L2 8.5 Z" fill="#5e5e5e"/></svg>
<div class="row" style="top:259px">Points</div>
<svg class="abs" style="left:43px;top:259px" width="16" height="16" viewBox="0 0 16 16"><path d="M2.5 3.5 H7.5 V5.5 H14 V14 H2.5 Z" fill="#fff" stroke="#111" stroke-width="1.3"/><path d="M2.5 6 H14" stroke="#111" stroke-width="1.8"/></svg>
<svg class="abs" style="left:26px;top:263px" width="8" height="10"><path d="M2 1.5 L6.5 5 L2 8.5 Z" fill="#5e5e5e"/></svg>
<div class="row" style="top:277px">Wire4454</div>
<svg class="abs" style="left:43px;top:277px" width="16" height="16" viewBox="0 0 16 16"><path d="M1 10.5 H4.5 L7 6 L9.5 12.5 L13 3.5 H15" fill="none" stroke="#6a6a6a" stroke-width="1.5"/></svg>
<div class="row" style="top:295px">Rectangle028</div>
<svg class="abs" style="left:43px;top:295px" width="16" height="16" viewBox="0 0 16 16"><rect x="1.5" y="6.5" width="8" height="8" fill="none" stroke="#777" stroke-width="1.4"/><path d="M5 5 L9.5 1.5 L14.5 5 L13 11 H10" fill="none" stroke="#777" stroke-width="1.4"/><circle cx="9" cy="8" r="2" fill="none" stroke="#777" stroke-width="1.2"/></svg>
<div class="row" style="top:313px">Rectangle030</div>
<svg class="abs" style="left:43px;top:313px" width="16" height="16" viewBox="0 0 16 16"><rect x="1.5" y="6.5" width="8" height="8" fill="none" stroke="#777" stroke-width="1.4"/><path d="M5 5 L9.5 1.5 L14.5 5 L13 11 H10" fill="none" stroke="#777" stroke-width="1.4"/><circle cx="9" cy="8" r="2" fill="none" stroke="#777" stroke-width="1.2"/></svg>
<div class="row" style="top:331px">Array003</div>
<svg class="abs" style="left:43px;top:331px" width="16" height="16" viewBox="0 0 16 16"><path d="M2.5 2 V15 M7.5 2 V15 M12.5 2 V15" stroke="#666" stroke-width="3"/><path d="M1 5 H15" stroke="#aaa" stroke-width="1"/></svg>
<svg class="abs" style="left:26px;top:335px" width="8" height="10"><path d="M2 1.5 L6.5 5 L2 8.5 Z" fill="#5e5e5e"/></svg>
<div class="row" style="top:349px">Sketch009</div>
<svg class="abs" style="left:43px;top:349px" width="16" height="16" viewBox="0 0 16 16"><circle cx="9" cy="7" r="5.5" fill="none" stroke="#888" stroke-width="1.3"/><rect x="0.5" y="8" width="8" height="7.5" rx="2" fill="#e010d0"/><rect x="2.5" y="10" width="4" height="2" fill="#fff"/><path d="M9 9 L15 15 M15 9 L10 15" stroke="#f0b000" stroke-width="2"/></svg>
<div class="abs" style="left:240px;top:375px;width:18px;height:1px;border-top:2px dotted #999"></div>
<div class="abs" style="left:0;top:378px;width:499px;height:215px;box-sizing:border-box;border:1px solid #b4b4b4;border-left:none;background:#f4f4f5"></div>
<div class="abs" style="left:1px;top:380px;width:496px;height:212px;box-sizing:border-box;border:1px solid #b9b9b9;background:#fcfcfc"></div>
<div class="hdr" style="left:2px;top:381px;width:100px;line-height:19px">Property</div>
<div class="hdr" style="left:102px;top:381px;width:394px;border-right:none;line-height:19px">Value</div>
<div class="abs" style="left:504px;top:340px;width:1px;height:17px;border-left:1px dotted #aaa"></div>
<svg width="856" height="468" viewBox="507 120 856 468" style="position:absolute;left:507px;top:120px" shape-rendering="auto">
<rect x="507" y="120" width="856" height="468" fill="#a2a2a2"/>
<polygon points="506.0,305.5 905.3,508.0 976.5,430.0 1025.7,376.7 1363.0,547.7 1363.0,588.0 506.0,588.0" fill="#6e7a86"/>
<polygon points="506.0,431.5 823.0,592.0 506.0,592.0" fill="#eae4e4"/>
<polygon points="506.0,427.5 830.0,592.0 823.0,592.0 506.0,431.5" fill="#7d8b98"/>
<polygon points="1086.5,529.5 1212.0,592.0 1030.0,592.0" fill="#55606b"/>
<polygon points="1086.0,533.5 1198.0,590.0 1036.0,590.0" fill="#eae4e4"/>
<line x1="560.4" y1="263.0" x2="507.3" y2="310.0" stroke="#000" stroke-opacity="0.22" stroke-width="1" fill="none"/>
<line x1="713.6" y1="341.8" x2="594.2" y2="471.0" stroke="#000" stroke-opacity="0.22" stroke-width="1" fill="none"/>
<line x1="508.0" y1="321.0" x2="1024.0" y2="589.0" stroke="#000" stroke-opacity="0.22" stroke-width="1" fill="none"/>
<line x1="1033.0" y1="320.4" x2="1363.0" y2="487.6" stroke="#000" stroke-opacity="0.22" stroke-width="1" fill="none"/>
<line x1="1140.8" y1="365.4" x2="939.0" y2="588.0" stroke="#000" stroke-opacity="0.22" stroke-width="1" fill="none"/>
<line x1="1294.8" y1="443.0" x2="1162.0" y2="588.0" stroke="#000" stroke-opacity="0.22" stroke-width="1" fill="none"/>
<polyline points="506.0,305.5 905.3,508.0" fill="none" stroke="#111" stroke-width="1.2"/><polyline points="506.0,305.5 905.3,508.0" fill="none" stroke="#fff" stroke-width="1.2" stroke-dasharray="1.8 1.2"/>
<polyline points="1025.7,376.7 1363.0,547.7" fill="none" stroke="#111" stroke-width="1.2"/><polyline points="1025.7,376.7 1363.0,547.7" fill="none" stroke="#fff" stroke-width="1.2" stroke-dasharray="1.8 1.2"/>
<polyline points="506.0,427.5 830.0,592.0" fill="none" stroke="#111" stroke-width="1.0"/><polyline points="506.0,427.5 830.0,592.0" fill="none" stroke="#fff" stroke-width="1.0" stroke-dasharray="1.8 1.2"/>
<polyline points="1030.0,592.0 1086.5,529.5 1212.0,592.0" fill="none" stroke="#111" stroke-width="1.0"/><polyline points="1030.0,592.0 1086.5,529.5 1212.0,592.0" fill="none" stroke="#fff" stroke-width="1.0" stroke-dasharray="1.8 1.2"/>
<line x1="1036" y1="590" x2="1086" y2="533.5" stroke="#222" stroke-width="1" stroke-dasharray="8 2"/>
<line x1="916" y1="366.8" x2="708" y2="592.5" stroke="#2e9a2e" stroke-width="1.3"/>
<polygon points="911.0,428.0 993.0,348.5 1006.6,350.0 918.8,444.8" fill="#a0a0a0"/>
<polygon points="997.5,120.0 1087.0,120.0 1046.0,290.0 1025.7,376.7 976.5,430.0 905.3,508.0 918.8,444.8 1006.6,350.0 1020.6,290.0 1051.7,152.0 1029.5,175.5 967.8,239.3" fill="#67aeeb"/>
<polygon points="997.5,120.0 1087.0,120.0 1046.0,290.0 1025.7,376.7 976.5,430.0 905.3,508.0 918.8,444.8 1006.6,350.0 1020.6,290.0 1051.7,152.0 1029.5,175.5 967.8,239.3" fill="none" stroke="#1a1a1a" stroke-width="0.9"/>
<polygon points="997.5,120.0 1087.0,120.0 1046.0,290.0 1025.7,376.7 976.5,430.0 905.3,508.0 918.8,444.8 1006.6,350.0 1020.6,290.0 1051.7,152.0 1029.5,175.5 967.8,239.3" fill="none" stroke="#fff" stroke-width="0.9" stroke-dasharray="1.2 2.4"/>
<line x1="934" y1="407" x2="1300" y2="592.5" stroke="#b0202a" stroke-width="1.3"/>
<polygon points="765.5,366.5 911.0,427.0 918.8,444.8 766.0,369.5" fill="#a6a6a6"/>
<polyline points="766.0,368.8 918.8,444.8" fill="none" stroke="#111" stroke-width="1.0"/><polyline points="766.0,368.8 918.8,444.8" fill="none" stroke="#fff" stroke-width="1.0" stroke-dasharray="1.8 1.2"/>
<polygon points="813.0,166.7 960.0,239.5 911.0,427.0 765.5,366.5" fill="#aaaaaa"/>
<polygon points="826.4,176.0 861.7,193.4 856.0,216.5 820.8,199.4" fill="#667e8a"/>
<polygon points="867.5,196.3 904.3,214.5 898.6,237.2 861.9,219.4" fill="#667e8a"/>
<polygon points="910.9,217.8 946.9,235.6 941.2,257.8 905.2,240.4" fill="#667e8a"/>
<polygon points="818.5,209.0 853.7,225.9 846.2,256.4 811.1,240.0" fill="#667e8a"/>
<polygon points="859.6,228.7 896.3,246.4 888.7,276.4 852.1,259.2" fill="#667e8a"/>
<polygon points="902.9,249.6 938.8,266.9 931.2,296.3 895.3,279.5" fill="#667e8a"/>
<polygon points="809.1,248.3 844.2,264.7 837.6,291.5 802.5,275.5" fill="#667e8a"/>
<polygon points="850.1,267.4 886.7,284.4 880.0,310.8 843.5,294.1" fill="#667e8a"/>
<polygon points="893.3,287.5 929.1,304.2 922.4,330.0 886.6,313.7" fill="#667e8a"/>
<polygon points="800.2,285.0 835.3,300.9 827.1,334.5 792.0,319.2" fill="#667e8a"/>
<polygon points="841.2,303.5 877.7,320.0 869.4,353.0 832.9,337.1" fill="#667e8a"/>
<polygon points="884.3,322.9 920.1,339.1 911.7,371.5 875.9,355.9" fill="#667e8a"/>
<polygon points="790.2,327.0 825.2,342.2 818.3,370.1 783.4,355.4" fill="#667e8a"/>
<polygon points="831.0,344.7 867.5,360.5 860.6,388.0 824.1,372.6" fill="#667e8a"/>
<polygon points="874.0,363.4 909.8,378.9 902.8,405.8 867.1,390.8" fill="#667e8a"/>
<polygon points="785.1,348.0 820.1,362.9 818.3,370.1 783.4,355.4" fill="#8fa6ae"/>
<polygon points="825.9,365.4 862.3,380.9 860.6,388.0 824.1,372.6" fill="#8fa6ae"/>
<polygon points="868.9,383.7 904.6,398.9 902.8,405.8 867.1,390.8" fill="#8fa6ae"/>
<line x1="816.0" y1="248.0" x2="868.0" y2="196.0" stroke="#000" stroke-width="1.0" stroke-opacity="0.15"/>
<line x1="805.0" y1="222.0" x2="960.0" y2="300.0" stroke="#000" stroke-width="1.0" stroke-opacity="0.12"/>
<line x1="788.5" y1="334.0" x2="909.6" y2="394.0" stroke="#b0202a" stroke-width="1.1"/>
<polygon points="817.1,197.7 943.4,258.9 941.0,267.9 814.8,207.2" fill="#b4b2b2"/>
<line x1="817.1" y1="197.7" x2="943.4" y2="258.9" stroke="#fff" stroke-width="1.3" stroke-dasharray="1.5 1.2"/>
<line x1="814.8" y1="207.2" x2="941.0" y2="267.9" stroke="#f4f4f4" stroke-width="1.3" stroke-dasharray="1.5 1.2"/>
<line x1="816.0" y1="202.4" x2="942.2" y2="263.4" stroke="#1a1a1a" stroke-width="2.0" stroke-dasharray="1 1.2"/>
<polygon points="807.4,238.2 933.4,297.3 931.3,305.2 805.4,246.6" fill="#b4b2b2"/>
<line x1="807.4" y1="238.2" x2="933.4" y2="297.3" stroke="#fff" stroke-width="1.3" stroke-dasharray="1.5 1.2"/>
<line x1="805.4" y1="246.6" x2="931.3" y2="305.2" stroke="#f4f4f4" stroke-width="1.3" stroke-dasharray="1.5 1.2"/>
<line x1="806.4" y1="242.4" x2="932.4" y2="301.3" stroke="#1a1a1a" stroke-width="2.0" stroke-dasharray="1 1.2"/>
<polygon points="798.9,273.9 924.6,331.0 922.3,340.1 796.6,283.4" fill="#b4b2b2"/>
<line x1="798.9" y1="273.9" x2="924.6" y2="331.0" stroke="#fff" stroke-width="1.3" stroke-dasharray="1.5 1.2"/>
<line x1="796.6" y1="283.4" x2="922.3" y2="340.1" stroke="#f4f4f4" stroke-width="1.3" stroke-dasharray="1.5 1.2"/>
<line x1="797.7" y1="278.6" x2="923.5" y2="335.6" stroke="#1a1a1a" stroke-width="2.0" stroke-dasharray="1 1.2"/>
<polygon points="788.4,317.6 913.9,372.5 912.0,379.8 786.5,325.4" fill="#b4b2b2"/>
<line x1="788.4" y1="317.6" x2="913.9" y2="372.5" stroke="#fff" stroke-width="1.3" stroke-dasharray="1.5 1.2"/>
<line x1="786.5" y1="325.4" x2="912.0" y2="379.8" stroke="#f4f4f4" stroke-width="1.3" stroke-dasharray="1.5 1.2"/>
<line x1="787.5" y1="321.5" x2="912.9" y2="376.1" stroke="#1a1a1a" stroke-width="2.0" stroke-dasharray="1 1.2"/>
<polygon points="769.5,349.5 915.2,411.1 911.0,427.0 765.5,366.5" fill="#bdbbbb"/>
<line x1="776.3" y1="354.6" x2="907.4" y2="409.9" stroke="#fff" stroke-width="1.3" stroke-dasharray="1.5 1.2"/>
<line x1="775.2" y1="359.6" x2="906.2" y2="414.6" stroke="#222" stroke-width="1.8" stroke-dasharray="1 1.2"/>
<line x1="770.9" y1="363.9" x2="907.7" y2="421.1" stroke="#f4f4f4" stroke-width="1.4" stroke-dasharray="1.5 1.2"/>
<polygon points="862.2,191.1 868.1,194.0 822.5,379.4 816.6,377.0" fill="#b9b7b7"/>
<line x1="862.8" y1="191.4" x2="817.2" y2="377.2" stroke="#fff" stroke-width="1.4" stroke-dasharray="1.5 1.2"/>
<line x1="866.2" y1="195.2" x2="821.0" y2="378.8" stroke="#0a0a0a" stroke-width="1.8"/>
<polygon points="904.9,212.2 911.5,215.5 865.4,397.5 858.9,394.7" fill="#b9b7b7"/>
<line x1="905.5" y1="212.5" x2="859.4" y2="395.0" stroke="#fff" stroke-width="1.4" stroke-dasharray="1.5 1.2"/>
<line x1="909.5" y1="216.7" x2="864.0" y2="396.8" stroke="#0a0a0a" stroke-width="1.8"/>
<polygon points="813.0,166.7 818.9,169.6 771.3,368.9 765.5,366.5" fill="#efebeb"/>
<line x1="818.9" y1="169.6" x2="771.3" y2="368.9" stroke="#333" stroke-width="1.0" stroke-dasharray="1.5 1.5"/>
<line x1="824.3" y1="174.5" x2="780.5" y2="357.4" stroke="#0a0a0a" stroke-width="1.8"/>
<polygon points="947.5,233.3 960.0,239.5 911.0,427.0 898.6,421.9" fill="#a4a4a4"/>
<line x1="949.0" y1="234.0" x2="900.1" y2="422.5" stroke="#fff" stroke-width="1.4" stroke-dasharray="1.5 1.2"/>
<line x1="953.4" y1="236.2" x2="904.5" y2="424.3" stroke="#f0f0f0" stroke-width="1.2" stroke-dasharray="1.5 1.5"/>
<line x1="958.5" y1="238.8" x2="909.5" y2="426.4" stroke="#111" stroke-width="1.2" stroke-dasharray="1.5 1.2"/>
<polyline points="765.5,366.5 813.0,166.7 960.0,239.5" fill="none" stroke="#111" stroke-width="1.2"/><polyline points="765.5,366.5 813.0,166.7 960.0,239.5" fill="none" stroke="#fff" stroke-width="1.2" stroke-dasharray="1.8 1.2"/>
<polyline points="765.5,366.5 911.0,427.0" fill="none" stroke="#111" stroke-width="1.2"/><polyline points="765.5,366.5 911.0,427.0" fill="none" stroke="#fff" stroke-width="1.2" stroke-dasharray="1.8 1.2"/>
<defs><pattern id="orn" width="3.2" height="3.2" patternUnits="userSpaceOnUse" patternTransform="rotate(25)"><rect width="3.2" height="3.2" fill="#eeecec"/><rect width="1.5" height="1.7" fill="#151515"/><rect x="1.7" y="1.9" width="1.5" height="1.3" fill="#a0a0a0"/></pattern></defs>
<polygon points="961.0,240.0 1029.5,175.5 993.0,348.5 914.0,428.0" fill="url(#orn)"/>
<polygon points="961.3,246.2 972.0,236.1 968.8,249.0 958.0,259.3" fill="#5f7682"/>
<polygon points="955.7,268.7 966.6,258.3 960.5,283.3 949.4,294.0" fill="#5f7682"/>
<polygon points="947.1,303.4 958.3,292.5 952.0,318.5 940.5,329.6" fill="#5f7682"/>
<polygon points="938.2,339.0 949.7,327.7 942.5,357.4 930.8,369.0" fill="#5f7682"/>
<polygon points="928.4,378.3 940.3,366.6 932.6,398.1 920.5,410.2" fill="#5f7682"/>
<polygon points="981.6,227.0 992.7,216.5 989.8,229.2 978.6,239.8" fill="#5f7682"/>
<polygon points="976.4,248.9 987.7,238.2 982.0,262.6 970.5,273.6" fill="#5f7682"/>
<polygon points="968.4,282.8 979.9,271.6 974.1,296.9 962.3,308.4" fill="#5f7682"/>
<polygon points="960.1,317.6 972.0,305.9 965.3,334.9 953.1,346.9" fill="#5f7682"/>
<polygon points="951.0,356.0 963.2,343.9 956.1,374.6 943.6,387.1" fill="#5f7682"/>
<polygon points="1001.6,208.1 1014.1,196.3 1011.4,208.6 998.8,220.6" fill="#8d989d"/>
<polygon points="996.8,229.5 1009.4,217.4 1004.2,241.2 991.3,253.6" fill="#8d989d"/>
<polygon points="989.3,262.6 1002.3,250.0 996.9,274.6 983.6,287.6" fill="#8d989d"/>
<polygon points="981.6,296.5 995.0,283.4 988.8,311.6 975.1,325.1" fill="#8d989d"/>
<polygon points="973.1,334.0 986.9,320.4 980.3,350.3 966.2,364.4" fill="#8d989d"/>
<line x1="955.8" y1="265.0" x2="1023.0" y2="201.1" stroke="#f4f4f4" stroke-width="2.2" stroke-dasharray="2 1.2"/>
<line x1="955.3" y1="267.2" x2="1022.6" y2="203.1" stroke="#222" stroke-width="0.9" stroke-dasharray="1.2 1.2"/>
<line x1="947.2" y1="299.7" x2="1016.2" y2="233.1" stroke="#f4f4f4" stroke-width="2.2" stroke-dasharray="2 1.2"/>
<line x1="946.6" y1="302.0" x2="1015.8" y2="235.2" stroke="#222" stroke-width="0.9" stroke-dasharray="1.2 1.2"/>
<line x1="938.3" y1="335.4" x2="1009.2" y2="266.0" stroke="#f4f4f4" stroke-width="2.2" stroke-dasharray="2 1.2"/>
<line x1="937.7" y1="337.6" x2="1008.8" y2="268.1" stroke="#222" stroke-width="0.9" stroke-dasharray="1.2 1.2"/>
<line x1="928.4" y1="374.8" x2="1001.5" y2="302.4" stroke="#f4f4f4" stroke-width="2.2" stroke-dasharray="2 1.2"/>
<line x1="927.9" y1="377.0" x2="1001.1" y2="304.5" stroke="#222" stroke-width="0.9" stroke-dasharray="1.2 1.2"/>
<line x1="978.8" y1="223.2" x2="934.5" y2="407.3" stroke="#111" stroke-width="1.4" stroke-dasharray="1.5 1.5"/>
<line x1="999.0" y1="204.2" x2="957.8" y2="383.9" stroke="#111" stroke-width="1.4" stroke-dasharray="1.5 1.5"/>
<line x1="1022.6" y1="181.9" x2="985.1" y2="356.4" stroke="#111" stroke-width="1.4" stroke-dasharray="1.5 1.5"/>
<polyline points="961.0,240.0 1029.5,175.5" fill="none" stroke="#111" stroke-width="1.0"/><polyline points="961.0,240.0 1029.5,175.5" fill="none" stroke="#fff" stroke-width="1.0" stroke-dasharray="1.8 1.2"/>
<line x1="916.0" y1="366.8" x2="846.0" y2="442.8" stroke="#2e9a2e" stroke-width="1.3"/>
<polygon points="1291.0,125.6 1278.7,139.1 1303.3,139.1" fill="#c9cbcd"/><polygon points="1291.0,125.6 1278.7,139.1 1303.3,139.1" fill="none" stroke="#111" stroke-width="0.8"/><polygon points="1291.0,125.6 1278.7,139.1 1303.3,139.1" fill="none" stroke="#fff" stroke-width="0.8" stroke-dasharray="1.8 1.2"/>
<polygon points="1291.0,257.8 1278.7,244.6 1303.3,244.6" fill="#c9cbcd"/><polygon points="1291.0,257.8 1278.7,244.6 1303.3,244.6" fill="none" stroke="#111" stroke-width="0.8"/><polygon points="1291.0,257.8 1278.7,244.6 1303.3,244.6" fill="none" stroke="#fff" stroke-width="0.8" stroke-dasharray="1.8 1.2"/>
<polygon points="1225.0,192.0 1238.4,180.0 1238.4,203.7" fill="#c9cbcd"/><polygon points="1225.0,192.0 1238.4,180.0 1238.4,203.7" fill="none" stroke="#111" stroke-width="0.8"/><polygon points="1225.0,192.0 1238.4,180.0 1238.4,203.7" fill="none" stroke="#fff" stroke-width="0.8" stroke-dasharray="1.8 1.2"/>
<polygon points="1356.5,192.0 1343.8,180.5 1343.8,203.7" fill="#c9cbcd"/><polygon points="1356.5,192.0 1343.8,180.5 1343.8,203.7" fill="none" stroke="#111" stroke-width="0.8"/><polygon points="1356.5,192.0 1343.8,180.5 1343.8,203.7" fill="none" stroke="#fff" stroke-width="0.8" stroke-dasharray="1.8 1.2"/>
<circle cx="1348" cy="134" r="6.6" fill="#c9cbcd" stroke="#111" stroke-width="0.8"/><circle cx="1348" cy="134" r="6.6" fill="none" stroke="#fff" stroke-width="0.8" stroke-dasharray="1.5 1.5"/>
<path d="M1273.6 135.3 Q1256 141 1247 152 L1243.5 148 L1241.5 160.5 L1254.5 160 L1251 156.5 Q1259 147 1275.5 141.5 Z" fill="#c9cbcd" stroke="#111" stroke-width="0.8"/><path d="M1273.6 135.3 Q1256 141 1247 152 L1243.5 148 L1241.5 160.5 L1254.5 160 L1251 156.5 Q1259 147 1275.5 141.5 Z" fill="none" stroke="#fff" stroke-width="0.8" stroke-dasharray="1.5 1.5"/>
<path d="M1308.4 135.3 Q1326 141 1335 152 L1338.5 148 L1340.5 160.5 L1327.5 160 L1331 156.5 Q1323 147 1306.5 141.5 Z" fill="#c9cbcd" stroke="#111" stroke-width="0.8"/><path d="M1308.4 135.3 Q1326 141 1335 152 L1338.5 148 L1340.5 160.5 L1327.5 160 L1331 156.5 Q1323 147 1306.5 141.5 Z" fill="none" stroke="#fff" stroke-width="0.8" stroke-dasharray="1.5 1.5"/>
<polygon points="1291.8,149.3 1281.4,151.4 1263.2,166.8 1257.9,173.0 1251.1,194.5 1249.8,201.6 1254.6,211.8 1259.6,218.6 1287.3,233.8 1298.9,232.9 1315.0,225.7 1329.3,214.1 1332.0,198.9 1332.9,181.1 1329.3,173.9 1322.5,163.6" fill="#c9cbcd"/>
<polygon points="1270.0,167.1 1281.4,151.8 1291.8,149.3 1322.5,163.6 1324.3,169.5 1310.0,186.1 1301.6,188.2 1271.8,174.3" fill="none" stroke="#111" stroke-width="0.9"/><polygon points="1270.0,167.1 1281.4,151.8 1291.8,149.3 1322.5,163.6 1324.3,169.5 1310.0,186.1 1301.6,188.2 1271.8,174.3" fill="none" stroke="#fff" stroke-width="0.9" stroke-dasharray="1.8 1.2"/>
<polygon points="1257.9,186.8 1266.8,184.1 1293.6,197.5 1297.5,206.4 1293.6,229.3 1287.3,233.8 1254.6,211.8 1251.1,194.5" fill="none" stroke="#111" stroke-width="0.9"/><polygon points="1257.9,186.8 1266.8,184.1 1293.6,197.5 1297.5,206.4 1293.6,229.3 1287.3,233.8 1254.6,211.8 1251.1,194.5" fill="none" stroke="#fff" stroke-width="0.9" stroke-dasharray="1.8 1.2"/>
<polygon points="1306.4,207.5 1311.4,205.2 1329.3,193.6 1332.0,198.9 1329.3,214.1 1315.0,225.7 1303.4,229.6" fill="none" stroke="#111" stroke-width="0.9"/><polygon points="1306.4,207.5 1311.4,205.2 1329.3,193.6 1332.0,198.9 1329.3,214.1 1315.0,225.7 1303.4,229.6" fill="none" stroke="#fff" stroke-width="0.9" stroke-dasharray="1.8 1.2"/>
<polygon points="1301.6,188.2 1310.0,186.1 1315.0,195.7 1311.4,205.2 1298.9,206.4 1293.6,197.5" fill="none" stroke="#111" stroke-width="0.9"/><polygon points="1301.6,188.2 1310.0,186.1 1315.0,195.7 1311.4,205.2 1298.9,206.4 1293.6,197.5" fill="none" stroke="#fff" stroke-width="0.9" stroke-dasharray="1.8 1.2"/>
<polygon points="1257.9,173.0 1263.2,167.1 1270.0,167.1 1271.8,174.3 1266.8,184.1 1257.9,186.8" fill="none" stroke="#111" stroke-width="0.9"/><polygon points="1257.9,173.0 1263.2,167.1 1270.0,167.1 1271.8,174.3 1266.8,184.1 1257.9,186.8" fill="none" stroke="#fff" stroke-width="0.9" stroke-dasharray="1.8 1.2"/>
<polygon points="1324.3,169.5 1332.9,181.1 1329.3,193.6" fill="none" stroke="#111" stroke-width="0.9"/><polygon points="1324.3,169.5 1332.9,181.1 1329.3,193.6" fill="none" stroke="#fff" stroke-width="0.9" stroke-dasharray="1.8 1.2"/>
<polygon points="1291.8,149.3 1281.4,151.4 1263.2,166.8 1257.9,173.0 1251.1,194.5 1249.8,201.6 1254.6,211.8 1259.6,218.6 1287.3,233.8 1298.9,232.9 1315.0,225.7 1329.3,214.1 1332.0,198.9 1332.9,181.1 1329.3,173.9 1322.5,163.6" fill="none" stroke="#111" stroke-width="1.0"/><polygon points="1291.8,149.3 1281.4,151.4 1263.2,166.8 1257.9,173.0 1251.1,194.5 1249.8,201.6 1254.6,211.8 1259.6,218.6 1287.3,233.8 1298.9,232.9 1315.0,225.7 1329.3,214.1 1332.0,198.9 1332.9,181.1 1329.3,173.9 1322.5,163.6" fill="none" stroke="#fff" stroke-width="1.0" stroke-dasharray="1.8 1.2"/>
<text x="0" y="0" font-size="9.5" font-family="Liberation Sans, sans-serif" font-weight="bold" fill="#d6d8da" stroke="#333" stroke-width="0.5" transform="translate(1309 172) rotate(200) skewX(-25)">TOP</text>
<text x="0" y="0" font-size="11.5" font-family="Liberation Sans, sans-serif" font-weight="bold" fill="#d6d8da" stroke="#333" stroke-width="0.5" transform="translate(1259 203.5) rotate(24) skewX(18)">REAR</text>
<text x="0" y="0" font-size="7" font-family="Liberation Sans, sans-serif" font-weight="bold" fill="#d6d8da" stroke="#333" stroke-width="0.5" transform="translate(1313.5 216) rotate(-52) skewX(-10)">LEFT</text>
<line x1="1331" y1="214.4" x2="1287.6" y2="192.7" stroke="#f35a5a" stroke-width="2"/>
<line x1="1331" y1="214.4" x2="1306.8" y2="241.2" stroke="#12e012" stroke-width="2"/>
<line x1="1331" y1="214.4" x2="1340" y2="176.7" stroke="#0a0af5" stroke-width="2"/>
<polygon points="1326.0,235.0 1336.0,229.0 1346.0,233.0 1346.0,246.0 1336.0,249.0 1326.0,246.0" fill="#c9cbcd"/><polygon points="1326.0,235.0 1336.0,229.0 1346.0,233.0 1346.0,246.0 1336.0,249.0 1326.0,246.0" fill="none" stroke="#111" stroke-width="0.8"/><polygon points="1326.0,235.0 1336.0,229.0 1346.0,233.0 1346.0,246.0 1336.0,249.0 1326.0,246.0" fill="none" stroke="#fff" stroke-width="0.8" stroke-dasharray="1.8 1.2"/>
<polyline points="1326.0,235.0 1336.0,238.0 1346.0,233.0" fill="none" stroke="#333" stroke-width="0.8"/>
<line x1="1336" y1="238" x2="1336" y2="249" stroke="#333" stroke-width="0.8"/>
<line x1="1340" y1="562" x2="1331" y2="557.5" stroke="#b03030" stroke-width="1.2"/>
<polygon points="1328.5,556.5 1333,555.5 1332,560" fill="#b03030"/>
<line x1="1340" y1="562" x2="1343" y2="549" stroke="#2a2ab0" stroke-width="1.2"/>
<polygon points="1343.5,544.5 1340.5,551 1346,551.5" fill="#2a2ab0"/>
<line x1="1340" y1="562" x2="1334" y2="569" stroke="#2a9a2a" stroke-width="1.2"/>
<polygon points="1331,572.5 1333,567 1337,570" fill="#2a9a2a"/>
<text x="1327" y="557" font-family="Liberation Sans, sans-serif" font-size="8" font-weight="bold" fill="#111">X</text>
<text x="1343.5" y="550" font-family="Liberation Sans, sans-serif" font-size="8" font-weight="bold" fill="#111">Z</text>
<text x="1332" y="574" font-family="Liberation Sans, sans-serif" font-size="8" font-weight="bold" fill="#111">Y</text>
</svg>
</body></html>
